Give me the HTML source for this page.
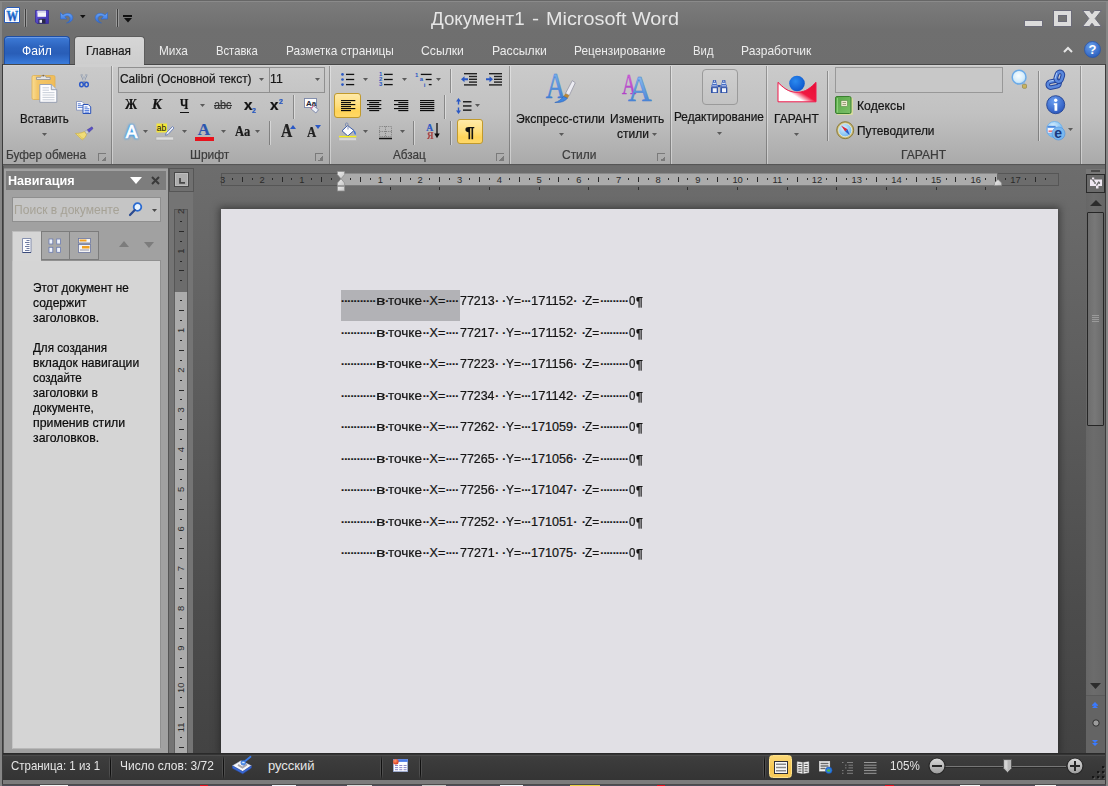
<!DOCTYPE html>
<html lang="ru">
<head>
<meta charset="utf-8">
<title>Документ1 - Microsoft Word</title>
<style>
*{box-sizing:border-box;margin:0;padding:0}
html,body{width:1108px;height:786px;overflow:hidden;background:#6e6e6e}
body{font-family:"Liberation Sans","DejaVu Sans",sans-serif;font-size:13px;color:#1e1e1e;position:relative}
#root,#root *{position:absolute}
#root{left:0;top:0;width:1108px;height:786px;overflow:hidden}
.t{white-space:nowrap;line-height:1;transform-origin:0 0;-webkit-text-stroke:.22px currentColor}
svg{overflow:visible}
#titlebar{left:0;top:0;width:1108px;height:65px;background:linear-gradient(#666 0,#666 1px,#8a8a8a 1px,#8a8a8a 2px,#7b7b7b 2px,#6f6f6f 30px,#6e6e6e 100%)}
#fileTab{left:4px;top:36px;width:66px;height:28px;border-radius:4px 4px 0 0;background:linear-gradient(#3d7bd8 0,#2c62bc 40%,#295eb8 62%,#3a7cdc 100%);border:1px solid #1f4fa4;border-bottom:none;box-shadow:inset 0 1px 0 #6c9be6}
#homeTab{left:73.500px;top:36px;width:71.200px;height:30px;border-radius:4px 4px 0 0;background:linear-gradient(#d6d6d6,#cdcdcd);border:1px solid #5d5d5d;border-bottom:none}
#ribbon{left:3px;top:64px;width:1102px;height:102px;background:linear-gradient(#484848 0,#484848 1px,#d2d2d2 1px,#d2d2d2 2px,#cacaca 2px,#c1c1c1 50px,#aaaaaa 100px,#525252 100px,#5c5c5c 101.500px,#6a6a6a 101.500px)}
.gsep{top:66px;width:2px;height:98px;background:linear-gradient(90deg,rgba(0,0,0,.27) 0,rgba(0,0,0,.27) 1px,rgba(255,255,255,.38) 1px)}
.vsep{width:2px;background:linear-gradient(90deg,rgba(0,0,0,.3) 0,rgba(0,0,0,.3) 1px,rgba(255,255,255,.4) 1px)}
.hot{background:linear-gradient(#ffeaa8,#ffde7c 50%,#ffd458 75%,#ffd868);border:1px solid #c19a2c;border-radius:3px}
.launch{width:8px;height:8px;border-left:1px solid #7a7a7a;border-top:1px solid #7a7a7a}
.launch:after{content:"";position:absolute;left:2px;top:2px;width:5px;height:5px;background:linear-gradient(135deg,transparent 50%,#7a7a7a 50%)}
</style>
</head>
<body>
<div id="root">
<!-- p_title -->
<div id="titlebar"></div>
<div class="t" style="left:430.6px;top:9.5px;font-size:18px;color:#e6e6e6;transform:scaleX(1.042);-webkit-text-stroke:0;">Документ1</div>
<div class="t" style="left:531.9px;top:9.5px;font-size:18px;color:#e6e6e6;transform:scaleX(1.178);-webkit-text-stroke:0;">-</div>
<div class="t" style="left:545.6px;top:9.5px;font-size:18px;color:#e6e6e6;transform:scaleX(1.102);-webkit-text-stroke:0;">Microsoft Word</div>
<svg style="left:4px;top:7px" width="16" height="16" viewBox="0 0 16 16"><defs><linearGradient id="wg" x1="0" y1="0" x2="0" y2="1"><stop offset="0" stop-color="#1f8ae0"/><stop offset="1" stop-color="#1840b0"/></linearGradient></defs><path d="M3 0.500h12.500v15h-15v-12.500z" fill="#fff" stroke="#2a5cb8" stroke-width="1"/><path d="M2 3.500l1.500-1.500h10.500v12h-12z" fill="#e4eefc"/><rect x="3" y="3" width="10" height="3" fill="#fff"/><text x="0" y="0" text-anchor="middle" font-family="Liberation Serif,serif" font-weight="bold" font-size="14.500" fill="url(#wg)" stroke="url(#wg)" stroke-width=".4" transform="translate(8.300 13.800) scale(.8 1)">W</text></svg>
<div style="left:23.5px;top:8.5px;width:3px;height:18.5px;background:linear-gradient(90deg,#9a9a9a 0,#9a9a9a 1px,#3e3e3e 1px,#3e3e3e 2px,#9a9a9a 2px);border-radius:1px"></div>
<svg style="left:34.5px;top:10px" width="14" height="14" viewBox="0 0 14 14"><defs><linearGradient id="sv" x1="0" y1="0" x2="1" y2="1"><stop offset="0" stop-color="#6a5ae0"/><stop offset="1" stop-color="#3a2ea8"/></linearGradient></defs><path d="M0.500 0.500h13v13h-11.500l-1.500-1.500z" fill="url(#sv)" stroke="#3a2e98" stroke-width=".8"/><rect x="2.500" y="0.800" width="8.500" height="6" fill="#f4f4fb"/><rect x="2.500" y="0.800" width="8.500" height="2" fill="#d4d4e8"/><rect x="3.500" y="8.800" width="7" height="4.700" fill="#2a2a48"/><rect x="4.500" y="9.800" width="2.500" height="3" fill="#e8e8f4"/></svg>
<svg style="left:60px;top:11px" width="13" height="12" viewBox="0 0 13 12"><defs><linearGradient id="ug" x1="0" y1="0" x2="0" y2="1"><stop offset="0" stop-color="#6aa6f8"/><stop offset="1" stop-color="#2f6ad8"/></linearGradient></defs><path d="M0.500 1.500v6.500h6.500l-2.300-2.300c2-1.800 5.300-1 5.300 2 0 1.800-1.200 3.200-3.500 4.300 4.300-.5 6.300-2.800 6.300-5.300 0-4.300-5.800-6-9.800-2.700z" fill="url(#ug)" stroke="#2f66c4" stroke-width=".6"/></svg>
<svg style="left:79.8px;top:15.4px" width="5.6" height="3.2" viewBox="0 0 5.6 3.2"><path d="M0 0h5.6L2.8 3.2z" fill="#111"/></svg>
<svg style="left:95px;top:11px" width="13" height="12" viewBox="0 0 13 12"><g transform="translate(13 0) scale(-1 1)"><path d="M0.500 1.500v6.500h6.500l-2.300-2.300c2-1.800 5.300-1 5.300 2 0 1.800-1.200 3.200-3.500 4.300 4.300-.5 6.300-2.800 6.300-5.300 0-4.300-5.800-6-9.800-2.700z" fill="url(#ug)" stroke="#2f66c4" stroke-width=".6"/></g></svg>
<div style="left:116.3px;top:8.5px;width:3px;height:18.5px;background:linear-gradient(90deg,#9a9a9a 0,#9a9a9a 1px,#3e3e3e 1px,#3e3e3e 2px,#9a9a9a 2px);border-radius:1px"></div>
<div style="left:123px;top:15px;width:9px;height:1.8px;background:#111"></div>
<svg style="left:123.5px;top:18px" width="8" height="4.5" viewBox="0 0 8 4.5"><path d="M0 0h8L4 4.5z" fill="#111"/></svg>
<div style="left:1024px;top:20px;width:19px;height:7px;background:#dcdcdc;border:1px solid #6b6b78"></div>
<div style="left:1053px;top:10px;width:19px;height:17px;background:#dcdcdc;border:1px solid #6b6b78"></div>
<div style="left:1058px;top:15px;width:9px;height:7px;background:#747474;border:1px solid #6b6b78"></div>
<svg style="left:1081.5px;top:10px" width="20" height="17" viewBox="0 0 20 17"><path d="M0.500 0.500h7l2.500 3.200 2.500-3.200h7l-6.300 8 6.300 8h-7l-2.500-3.200-2.500 3.200h-7l6.300-8z" fill="#dcdcdc" stroke="#6b6b78" stroke-width="1"/></svg>
<div id="fileTab"></div>
<div id="homeTab"></div>
<div class="t" style="left:22.0px;top:44.3px;font-size:13px;color:#fff;transform:scaleX(0.933);-webkit-text-stroke:0;">Файл</div>
<div class="t" style="left:86.3px;top:44.3px;font-size:13px;color:#1b1b1b;transform:scaleX(0.909);">Главная</div>
<div class="t" style="left:158.7px;top:44.3px;font-size:13px;color:#ececec;transform:scaleX(0.908);-webkit-text-stroke:0;">Миха</div>
<div class="t" style="left:215.7px;top:44.3px;font-size:13px;color:#ececec;transform:scaleX(0.865);-webkit-text-stroke:0;">Вставка</div>
<div class="t" style="left:285.6px;top:44.3px;font-size:13px;color:#ececec;transform:scaleX(0.915);-webkit-text-stroke:0;">Разметка страницы</div>
<div class="t" style="left:421.4px;top:44.3px;font-size:13px;color:#ececec;transform:scaleX(0.938);-webkit-text-stroke:0;">Ссылки</div>
<div class="t" style="left:491.5px;top:44.3px;font-size:13px;color:#ececec;transform:scaleX(0.941);-webkit-text-stroke:0;">Рассылки</div>
<div class="t" style="left:573.7px;top:44.3px;font-size:13px;color:#ececec;transform:scaleX(0.912);-webkit-text-stroke:0;">Рецензирование</div>
<div class="t" style="left:692.7px;top:44.3px;font-size:13px;color:#ececec;transform:scaleX(0.872);-webkit-text-stroke:0;">Вид</div>
<div class="t" style="left:740.6px;top:44.3px;font-size:13px;color:#ececec;transform:scaleX(0.926);-webkit-text-stroke:0;">Разработчик</div>
<svg style="left:1063px;top:46px" width="10" height="7" viewBox="0 0 10 7"><path d="M1 6l4-4 4 4" fill="none" stroke="#e6e6e6" stroke-width="2"/></svg>
<svg style="left:1084px;top:41px" width="17" height="17" viewBox="0 0 17 17"><defs><radialGradient id="hg" cx=".4" cy=".3" r=".8"><stop offset="0" stop-color="#6aa0ec"/><stop offset="1" stop-color="#2458b8"/></radialGradient></defs><circle cx="8.5" cy="8.5" r="8" fill="url(#hg)" stroke="#2a55a8" stroke-width=".8"/><text x="8.5" y="13" text-anchor="middle" font-family="Liberation Sans, sans-serif" font-weight="bold" font-size="13" fill="#fff">?</text></svg>
<!-- p_ribbon -->
<div id="ribbon"></div>
<div style="left:74.5px;top:64px;width:69.2px;height:2.5px;background:#cfcfcf"></div>
<div class="gsep" style="left:111px"></div>
<div class="gsep" style="left:328.5px"></div>
<div class="gsep" style="left:509px"></div>
<div class="gsep" style="left:670px"></div>
<div class="gsep" style="left:766px"></div>
<div class="gsep" style="left:1080px"></div>
<div class="t" style="left:5.5px;top:148.0px;font-size:13px;color:#3c3c3c;transform:scaleX(0.907);">Буфер обмена</div>
<div class="t" style="left:189.5px;top:148.0px;font-size:13px;color:#3c3c3c;transform:scaleX(0.920);">Шрифт</div>
<div class="t" style="left:392.5px;top:148.0px;font-size:13px;color:#3c3c3c;transform:scaleX(0.899);">Абзац</div>
<div class="t" style="left:561.9px;top:148.0px;font-size:13px;color:#3c3c3c;transform:scaleX(0.919);">Стили</div>
<div class="t" style="left:901.0px;top:147.6px;font-size:13px;color:#3c3c3c;transform:scaleX(0.930);">ГАРАНТ</div>
<div class="launch" style="left:97.5px;top:153px"></div>
<div class="launch" style="left:314.5px;top:153px"></div>
<div class="launch" style="left:495.5px;top:153px"></div>
<div class="launch" style="left:656.5px;top:153px"></div>
<svg style="left:31px;top:72px" width="27" height="31" viewBox="0 0 27 31"><defs><linearGradient id="pb" x1="0" y1="0" x2="1" y2="0"><stop offset="0" stop-color="#f9dc94"/><stop offset=".25" stop-color="#f4c666"/><stop offset="1" stop-color="#f0bc58"/></linearGradient></defs>
<rect x="1" y="3.500" width="23" height="24" rx="1.500" fill="url(#pb)" stroke="#e0b050" stroke-width=".8"/>
<path d="M5.500 7.500v-2.200h4.200c.3-2.400 5-2.400 5.300 0h4.200v2.200z" fill="#e4e6ea" stroke="#8a8e98" stroke-width=".8"/><circle cx="12.300" cy="3.700" r=".9" fill="#8a6a3a"/>
<path d="M8.800 12.500h11.500l5.500 5.200v12.600h-17z" fill="#fdfdfe" stroke="#8e98ae" stroke-width=".9"/>
<path d="M20.300 12.500v5.200h5.500" fill="#dfe4ee" stroke="#8e98ae" stroke-width=".9"/>
<path d="M11.500 15.800h6.500M11.500 18.200h6.500M11.500 20.600h12M11.500 23h12M11.500 25.400h12M11.500 27.800h12" stroke="#c2c8d4" stroke-width=".9"/></svg>
<div class="t" style="left:19.6px;top:112.0px;font-size:13px;color:#151515;transform:scaleX(0.887);">Вставить</div>
<svg style="left:42.2px;top:132.5px" width="5" height="3" viewBox="0 0 5 3"><path d="M0 0h5L2.5 3z" fill="#5a5a5a"/></svg>
<svg style="left:78.5px;top:74px" width="10" height="14" viewBox="0 0 10 14"><path d="M2.300 0.300l3.400 8.200M7.700 0.300l-3.400 8.200" stroke="#8a94a4" stroke-width="1.900" fill="none"/><path d="M2.600 0.600l2.800 6.500M7.400 0.600l-2.800 6.500" stroke="#d8dce4" stroke-width=".7" fill="none"/><ellipse cx="2.500" cy="10.500" rx="1.800" ry="2.300" fill="none" stroke="#2a58c8" stroke-width="1.500"/><ellipse cx="7.500" cy="10.500" rx="1.800" ry="2.300" fill="none" stroke="#2a58c8" stroke-width="1.500"/></svg>
<svg style="left:75.5px;top:100.5px" width="16" height="13" viewBox="0 0 16 13"><path d="M0.500 0.500h5.500l2.300 2.300v6.400h-7.800z" fill="#fbfcff" stroke="#7a8ab8" stroke-width=".8"/><path d="M1.800 2.800h3M1.800 4.600h5M1.800 6.400h5" stroke="#4a72d0" stroke-width=".9"/><path d="M7 3.500h5.300l2.400 2.400v6.600h-7.700z" fill="#fbfcff" stroke="#2a52b8" stroke-width="1"/><path d="M8.500 6h3M8.500 7.800h4.800M8.500 9.600h4.800M8.500 11.200h4.800" stroke="#3a6ad8" stroke-width=".9"/></svg>
<svg style="left:75px;top:126px" width="18" height="15" viewBox="0 0 18 15"><path d="M17 0.800l1 1.800-4.200 3.800-1.800-2.400z" fill="#5a4ec8" stroke="#3a3498" stroke-width=".5"/><path d="M12 4l1.800 2.400-2.200 2-2.200-2.800z" fill="#c8ccd4" stroke="#8a8e98" stroke-width=".5"/><path d="M9.400 5.600l2.200 2.800c-.6 2.200-2.400 4.200-4.200 5.400-2-1.400-5-4.400-7-6.400 3.400 0 6.800-.4 9-1.800z" fill="#f0dc78" stroke="#c8aa3a" stroke-width=".6"/><path d="M3 8.500c2.500 1.500 4 3 5 4.500" stroke="#d8c050" stroke-width=".7" fill="none"/></svg>
<div style="left:117.5px;top:67px;width:152px;height:25.5px;border:1px solid #909090;background:linear-gradient(#cbcbcb,#c5c5c5)"></div>
<div style="left:268.5px;top:67px;width:56.5px;height:25.5px;border:1px solid #909090;background:linear-gradient(#cbcbcb,#c5c5c5)"></div>
<div class="t" style="left:120.1px;top:72.0px;font-size:13px;color:#151515;transform:scaleX(0.916);">Calibri (Основной текст)</div>
<svg style="left:258.7px;top:77.5px" width="5" height="3" viewBox="0 0 5 3"><path d="M0 0h5L2.5 3z" fill="#5a5a5a"/></svg>
<div class="t" style="left:270.4px;top:72.0px;font-size:13px;color:#151515;transform:scaleX(0.943);">11</div>
<svg style="left:315px;top:77.5px" width="5" height="3" viewBox="0 0 5 3"><path d="M0 0h5L2.5 3z" fill="#5a5a5a"/></svg>
<div class="t" style="left:124.7px;top:98.3px;font-size:14px;color:#111;font-family:'Liberation Serif','DejaVu Serif',serif;font-weight:bold;transform:scaleX(0.869);">Ж</div>
<div class="t" style="left:152.1px;top:98.3px;font-size:14px;color:#111;font-family:'Liberation Serif','DejaVu Serif',serif;font-weight:bold;font-style:italic;transform:scaleX(1.026);">К</div>
<div class="t" style="left:179.6px;top:98.3px;font-size:14px;color:#111;font-family:'Liberation Serif','DejaVu Serif',serif;font-weight:bold;transform:scaleX(0.809);">Ч</div>
<div style="left:179.5px;top:111.5px;width:9px;height:1.2px;background:#111"></div>
<svg style="left:200px;top:104px" width="5" height="3" viewBox="0 0 5 3"><path d="M0 0h5L2.5 3z" fill="#5a5a5a"/></svg>
<div class="t" style="left:213.8px;top:99.3px;font-size:12px;color:#333;transform:scaleX(0.901);">abc</div>
<div style="left:213.5px;top:105.3px;width:18.5px;height:1px;background:#333"></div>
<div class="t" style="left:243.6px;top:98.1px;font-size:14px;color:#111;font-weight:bold;transform:scaleX(1.090);">x</div>
<div class="t" style="left:252.3px;top:106.6px;font-size:7px;color:#2456c0;font-weight:bold;transform:scaleX(1.036);">2</div>
<div class="t" style="left:269.9px;top:98.1px;font-size:14px;color:#111;font-weight:bold;transform:scaleX(1.090);">x</div>
<div class="t" style="left:278.8px;top:98.1px;font-size:7px;color:#2456c0;font-weight:bold;transform:scaleX(1.036);">2</div>
<div class="vsep" style="left:292.500px;top:95px;height:24px"></div>
<svg style="left:303.5px;top:97.5px" width="17" height="16" viewBox="0 0 17 16"><rect x="0.500" y="0.500" width="12" height="9" fill="#fdfdfd" stroke="#7a86a8" stroke-width=".9"/><text x="2" y="8" font-family="Liberation Sans,sans-serif" font-size="8" font-weight="bold" fill="#223">Aa</text><path d="M9.500 7.500l5 4.200-2.600 3.300-5-4.200z" fill="#eef1f8" stroke="#7a86a8" stroke-width=".9"/><path d="M7 10.800l2.500-3.200" stroke="#d9749a" stroke-width="1.200"/></svg>
<svg style="left:123px;top:123.5px" width="17" height="16" viewBox="0 0 17 16"><defs><filter id="gl" x="-40%" y="-40%" width="180%" height="180%"><feGaussianBlur stdDeviation="1.300"/></filter></defs><text x="8.500" y="14" text-anchor="middle" font-family="Liberation Sans,sans-serif" font-size="18" font-weight="bold" fill="#3a9cf0" stroke="#3a9cf0" stroke-width="1.500" filter="url(#gl)">A</text><text x="8.500" y="14" text-anchor="middle" font-family="Liberation Sans,sans-serif" font-size="17.500" fill="#fff" stroke="#fff" stroke-width=".7">A</text></svg>
<svg style="left:143.2px;top:130px" width="5" height="3" viewBox="0 0 5 3"><path d="M0 0h5L2.5 3z" fill="#5a5a5a"/></svg>
<svg style="left:156px;top:123px" width="19" height="18" viewBox="0 0 19 18"><rect x="0.500" y="0.500" width="10.500" height="9" fill="#f4e63a"/><text x="0.800" y="8" font-family="Liberation Sans,sans-serif" font-size="8.500" fill="#111">ab</text><path d="M16.500 3.500l1.500 1.500-6 6.500-2.500.8.700-2.500z" fill="#e8ecf6" stroke="#5c74b0" stroke-width=".8"/><rect x="0" y="14" width="17.500" height="3" fill="#dcdcdc" stroke="#a8a8a8" stroke-width=".5"/></svg>
<svg style="left:182px;top:130px" width="5" height="3" viewBox="0 0 5 3"><path d="M0 0h5L2.5 3z" fill="#5a5a5a"/></svg>
<div class="t" style="left:197.8px;top:120.8px;font-size:17px;color:#2a55b0;font-family:'Liberation Serif','DejaVu Serif',serif;font-weight:bold;">A</div>
<div style="left:195px;top:137px;width:19px;height:3.5px;background:#e8121c"></div>
<svg style="left:220.7px;top:130px" width="5" height="3" viewBox="0 0 5 3"><path d="M0 0h5L2.5 3z" fill="#5a5a5a"/></svg>
<div class="t" style="left:234.9px;top:123.9px;font-size:14.5px;color:#1a1a1a;font-family:'Liberation Serif','DejaVu Serif',serif;font-weight:bold;transform:scaleX(0.863);">Aa</div>
<svg style="left:255px;top:130px" width="5" height="3" viewBox="0 0 5 3"><path d="M0 0h5L2.5 3z" fill="#5a5a5a"/></svg>
<div class="vsep" style="left:269px;top:121px;height:24px"></div>
<div class="t" style="left:280.9px;top:122.4px;font-size:18px;color:#222;font-family:'Liberation Serif','DejaVu Serif',serif;font-weight:bold;transform:scaleX(0.865);">A</div>
<svg style="left:290px;top:125px" width="6" height="4" viewBox="0 0 6 4"><path d="M0 4l3-4 3 4z" fill="#2a58c4"/></svg>
<div class="t" style="left:306.9px;top:125.8px;font-size:14px;color:#222;font-family:'Liberation Serif','DejaVu Serif',serif;font-weight:bold;transform:scaleX(0.910);">A</div>
<svg style="left:314.5px;top:125px" width="6" height="4" viewBox="0 0 6 4"><path d="M0 0h6l-3 4z" fill="#2a58c4"/></svg>
<svg style="left:341px;top:73px" width="14" height="13" viewBox="0 0 14 13"><circle cx="1.500" cy="1.4" r="1.350" fill="#2a58c4"/><rect x="5" y="0.75" width="8.200" height="1.300" fill="#111"/><circle cx="1.500" cy="6.5" r="1.350" fill="#2a58c4"/><rect x="5" y="5.85" width="8.200" height="1.300" fill="#111"/><circle cx="1.500" cy="11.6" r="1.350" fill="#2a58c4"/><rect x="5" y="10.95" width="8.200" height="1.300" fill="#111"/></svg>
<svg style="left:362.5px;top:77.5px" width="5" height="3" viewBox="0 0 5 3"><path d="M0 0h5L2.5 3z" fill="#5a5a5a"/></svg>
<svg style="left:379.2px;top:72px" width="14" height="14" viewBox="0 0 14 14"><text x="0" y="4.2" font-family="Liberation Sans,sans-serif" font-size="6" font-weight="bold" fill="#2a58c4">1</text><rect x="5" y="1.75" width="8.700" height="1.300" fill="#111"/><text x="0" y="9.3" font-family="Liberation Sans,sans-serif" font-size="6" font-weight="bold" fill="#2a58c4">2</text><rect x="5" y="6.85" width="8.700" height="1.300" fill="#111"/><text x="0" y="14.4" font-family="Liberation Sans,sans-serif" font-size="6" font-weight="bold" fill="#2a58c4">3</text><rect x="5" y="11.95" width="8.700" height="1.300" fill="#111"/></svg>
<svg style="left:402px;top:77.5px" width="5" height="3" viewBox="0 0 5 3"><path d="M0 0h5L2.5 3z" fill="#5a5a5a"/></svg>
<svg style="left:415.2px;top:72px" width="18" height="15" viewBox="0 0 18 15"><text x="0" y="4.500" font-family="Liberation Sans,sans-serif" font-size="6" font-weight="bold" fill="#2a58c4">1</text><rect x="5.800" y="1.750" width="10.800" height="1.300" fill="#111"/><text x="4.800" y="9.400" font-family="Liberation Sans,sans-serif" font-size="6" font-weight="bold" fill="#2a58c4">a</text><rect x="10.700" y="6.850" width="5.900" height="1.300" fill="#111"/><text x="8.800" y="14.800" font-family="Liberation Sans,sans-serif" font-size="6" font-weight="bold" fill="#2a58c4">i</text><rect x="13.800" y="11.950" width="2.800" height="1.300" fill="#111"/></svg>
<svg style="left:436.2px;top:77.5px" width="5" height="3" viewBox="0 0 5 3"><path d="M0 0h5L2.5 3z" fill="#5a5a5a"/></svg>
<div class="vsep" style="left:450px;top:69px;height:24px"></div>
<svg style="left:460.7px;top:73px" width="17" height="13" viewBox="0 0 17 13"><rect x="3" y="0" width="13" height="1.400" fill="#222"/><rect x="8" y="2.8" width="8" height="1.400" fill="#222"/><rect x="8" y="5.6" width="8" height="1.400" fill="#222"/><rect x="8" y="8.4" width="8" height="1.400" fill="#222"/><rect x="3" y="11.2" width="13" height="1.400" fill="#222"/><path d="M0 6.300l3.500-3v2h3.500v2h-3.500v2z" fill="#2a58c4"/></svg>
<svg style="left:485.7px;top:73px" width="17" height="13" viewBox="0 0 17 13"><rect x="3" y="0" width="13" height="1.400" fill="#222"/><rect x="8" y="2.8" width="8" height="1.400" fill="#222"/><rect x="8" y="5.6" width="8" height="1.400" fill="#222"/><rect x="8" y="8.4" width="8" height="1.400" fill="#222"/><rect x="3" y="11.2" width="13" height="1.400" fill="#222"/><path d="M7 6.300l-3.500-3v2h-3.500v2h3.500v2z" fill="#2a58c4"/></svg>
<div class="hot" style="left:334px;top:92.500px;width:26.500px;height:25.500px"></div>
<svg style="left:340.8px;top:99.9px" width="14" height="12" viewBox="0 0 14 12"><rect x="0" y="0" width="14.3" height="1.150" fill="#0c0c0c"/><rect x="0" y="2" width="10" height="1.150" fill="#0c0c0c"/><rect x="0" y="4" width="14.3" height="1.150" fill="#0c0c0c"/><rect x="0" y="6" width="10" height="1.150" fill="#0c0c0c"/><rect x="0" y="8" width="14.3" height="1.150" fill="#0c0c0c"/><rect x="0" y="10" width="10" height="1.150" fill="#0c0c0c"/></svg>
<svg style="left:367.3px;top:99.9px" width="14" height="12" viewBox="0 0 14 12"><rect x="0" y="0" width="14.3" height="1.150" fill="#0c0c0c"/><rect x="2.2" y="2" width="10" height="1.150" fill="#0c0c0c"/><rect x="0" y="4" width="14.3" height="1.150" fill="#0c0c0c"/><rect x="2.2" y="6" width="10" height="1.150" fill="#0c0c0c"/><rect x="0" y="8" width="14.3" height="1.150" fill="#0c0c0c"/><rect x="2.2" y="10" width="10" height="1.150" fill="#0c0c0c"/></svg>
<svg style="left:393.8px;top:99.9px" width="14" height="12" viewBox="0 0 14 12"><rect x="0" y="0" width="14.3" height="1.150" fill="#0c0c0c"/><rect x="4.3" y="2" width="10" height="1.150" fill="#0c0c0c"/><rect x="0" y="4" width="14.3" height="1.150" fill="#0c0c0c"/><rect x="4.3" y="6" width="10" height="1.150" fill="#0c0c0c"/><rect x="0" y="8" width="14.3" height="1.150" fill="#0c0c0c"/><rect x="4.3" y="10" width="10" height="1.150" fill="#0c0c0c"/></svg>
<svg style="left:420.2px;top:99.9px" width="14" height="12" viewBox="0 0 14 12"><rect x="0" y="0" width="14.3" height="1.150" fill="#0c0c0c"/><rect x="0" y="2" width="14.3" height="1.150" fill="#0c0c0c"/><rect x="0" y="4" width="14.3" height="1.150" fill="#0c0c0c"/><rect x="0" y="6" width="14.3" height="1.150" fill="#0c0c0c"/><rect x="0" y="8" width="14.3" height="1.150" fill="#0c0c0c"/><rect x="0" y="10" width="14.3" height="1.150" fill="#0c0c0c"/></svg>
<div class="vsep" style="left:444px;top:95px;height:24px"></div>
<svg style="left:456px;top:97.5px" width="16" height="16" viewBox="0 0 16 16"><path d="M2.500 0l2.500 3.500h-1.800v3h-1.400v-3h-1.800zM2.500 16l2.500-3.500h-1.800v-3h-1.400v3h-1.800z" fill="#2a58c4"/><rect x="7" y="3" width="8.500" height="1.500" fill="#222"/><rect x="7" y="7.200" width="8.500" height="1.500" fill="#222"/><rect x="7" y="11.400" width="8.500" height="1.500" fill="#222"/></svg>
<svg style="left:475px;top:104px" width="5" height="3" viewBox="0 0 5 3"><path d="M0 0h5L2.5 3z" fill="#5a5a5a"/></svg>
<svg style="left:338.7px;top:123px" width="19" height="18" viewBox="0 0 19 18"><path d="M8.500 2.500l6.500 5-6.200 5.500-5.800-5.200z" fill="#fbfcff" stroke="#3a5aa8" stroke-width="1"/><path d="M9 6.500v-5.500c0-1.500-2.500-1.500-2.500 0v2" fill="none" stroke="#7a8ab0" stroke-width=".9"/><path d="M14.800 7.300c1.800 1.200 2.600 3.200 1.700 4.800-1.300-.8-2-2.800-1.700-4.800z" fill="#3a74e0"/><rect x="0" y="12.900" width="17.300" height="1.700" fill="#f8f018"/><rect x="0" y="14.800" width="17.300" height="2.800" fill="#d8d8d8" stroke="#b0b0b0" stroke-width=".5"/></svg>
<svg style="left:362.5px;top:130px" width="5" height="3" viewBox="0 0 5 3"><path d="M0 0h5L2.5 3z" fill="#5a5a5a"/></svg>
<svg style="left:379.3px;top:126px" width="13" height="14" viewBox="0 0 13 14"><rect x="0.500" y="0.500" width="12" height="10" fill="none" stroke="#7a7a7a" stroke-width="1" stroke-dasharray="1 1.200"/><path d="M6.500 0.500v10M0.500 5.500h12" stroke="#7a7a7a" stroke-width="1" stroke-dasharray="1 1.200"/><path d="M0 12.500h13" stroke="#111" stroke-width="1.500"/></svg>
<svg style="left:399.5px;top:130px" width="5" height="3" viewBox="0 0 5 3"><path d="M0 0h5L2.5 3z" fill="#5a5a5a"/></svg>
<div class="vsep" style="left:412.500px;top:121px;height:24px"></div>
<div class="t" style="left:426.2px;top:124.0px;font-size:9.5px;color:#2a58c4;font-family:'Liberation Serif','DejaVu Serif',serif;font-weight:bold;">А</div>
<div class="t" style="left:426.5px;top:132.2px;font-size:9.5px;color:#a84848;font-family:'Liberation Serif','DejaVu Serif',serif;font-weight:bold;transform:scaleX(0.939);">Я</div>
<svg style="left:434.2px;top:123.4px" width="6" height="15.5" viewBox="0 0 6 15.5"><path d="M3 0v12" stroke="#0c0c0c" stroke-width="1.300"/><path d="M0.300 10.500h5.400l-2.700 4.800z" fill="#0c0c0c"/></svg>
<div class="vsep" style="left:450px;top:121px;height:24px"></div>
<div class="hot" style="left:456.700px;top:119px;width:26px;height:25px"></div>
<div class="t" style="left:464.9px;top:124.3px;font-size:15px;color:#111;font-weight:bold;transform:scaleX(1.159);">¶</div>
<svg style="left:0px;top:0px" width="1" height="1" viewBox="0 0 1 1"><defs><linearGradient id="qa" x1="0" y1="0" x2="0" y2="1"><stop offset="0" stop-color="#8cc0f4"/><stop offset="1" stop-color="#2f6fcc"/></linearGradient></defs><text transform="translate(555.700 97.700) scale(.75 1)" text-anchor="middle" font-family="Liberation Serif,serif" font-size="36.500" fill="url(#qa)" stroke="#3f7cd0" stroke-width=".5">A</text><path d="M572.300 80.600l3 2.200-6 12.600-3.800-2z" fill="#ececf2" stroke="#8c8c9c" stroke-width=".7"/><path d="M565.500 93.400l3.800 2-1.900 3.300-4.200-2.100z" fill="#b8883a"/><path d="M563.600 96.400l3.800 1.900c-2.400 3-6.600 4.700-12.600 4.200 3.600-1 6.400-3 8.800-6.100z" fill="#3f86e0" stroke="#2a62b8" stroke-width=".6"/></svg>
<div class="t" style="left:516.4px;top:112.0px;font-size:13px;color:#151515;transform:scaleX(0.935);">Экспресс-стили</div>
<svg style="left:558.7px;top:132.5px" width="5" height="3" viewBox="0 0 5 3"><path d="M0 0h5L2.5 3z" fill="#5a5a5a"/></svg>
<svg style="left:0px;top:0px" width="1" height="1" viewBox="0 0 1 1"><defs><linearGradient id="ca" x1="0" y1="0" x2="0" y2="1"><stop offset="0" stop-color="#96c6f6"/><stop offset="1" stop-color="#3a78d0"/></linearGradient><linearGradient id="cb" x1="0" y1="0" x2="0" y2="1"><stop offset="0" stop-color="#e070e0"/><stop offset="1" stop-color="#a838c0"/></linearGradient></defs><text transform="translate(629 93.600) scale(.68 1)" text-anchor="middle" font-family="Liberation Serif,serif" font-size="28.500" fill="url(#cb)" stroke="#b040c8" stroke-width=".4">A</text><text transform="translate(639.800 101.200) scale(.92 1)" text-anchor="middle" font-family="Liberation Serif,serif" font-size="35.500" fill="url(#ca)" stroke="#3f7cd0" stroke-width=".5">A</text></svg>
<div class="t" style="left:610.0px;top:112.0px;font-size:13px;color:#151515;transform:scaleX(0.924);">Изменить</div>
<div class="t" style="left:616.5px;top:127.0px;font-size:13px;color:#151515;transform:scaleX(0.921);">стили</div>
<svg style="left:652.2px;top:132.5px" width="5" height="3" viewBox="0 0 5 3"><path d="M0 0h5L2.5 3z" fill="#5a5a5a"/></svg>
<div style="left:702px;top:69px;width:36px;height:36px;border:1px solid #9a9a9a;border-radius:4px;background:linear-gradient(#cfcfcf,#c3c3c3)"></div>
<svg style="left:711px;top:80.3px" width="17" height="13" viewBox="0 0 17 13"><rect x="1.8" y="0" width="3.400" height="2.600" rx=".8" fill="#3a5eb8"/><circle cx="3.5" cy="1.200" r=".6" fill="#e8eefb"/><rect x="1.2" y="2.400" width="4.600" height="2.600" fill="#4a72cc"/><rect x="1.7" y="3" width="3.600" height=".9" fill="#e0e8f8"/><rect x="0.5" y="4.800" width="6" height="2.600" fill="#3a5eb8"/><rect x="1.2" y="5.400" width="4.600" height=".9" fill="#dfe7f8"/><rect x="0" y="7.200" width="7" height="5.800" fill="#2f52a8"/><rect x="1.7" y="8.200" width="4" height="4" fill="#eef2fc"/><rect x="11.1" y="0" width="3.400" height="2.600" rx=".8" fill="#3a5eb8"/><circle cx="12.8" cy="1.200" r=".6" fill="#e8eefb"/><rect x="10.5" y="2.400" width="4.600" height="2.600" fill="#4a72cc"/><rect x="11" y="3" width="3.600" height=".9" fill="#e0e8f8"/><rect x="9.8" y="4.800" width="6" height="2.600" fill="#3a5eb8"/><rect x="10.5" y="5.400" width="4.600" height=".9" fill="#dfe7f8"/><rect x="9.3" y="7.200" width="7" height="5.800" fill="#2f52a8"/><rect x="11" y="8.200" width="4" height="4" fill="#eef2fc"/><rect x="6.800" y="5" width="2.800" height="2.200" fill="#2f52a8"/></svg>
<div class="t" style="left:674.3px;top:110.3px;font-size:13px;color:#151515;transform:scaleX(0.908);">Редактирование</div>
<svg style="left:717.2px;top:131.5px" width="5" height="3" viewBox="0 0 5 3"><path d="M0 0h5L2.5 3z" fill="#5a5a5a"/></svg>
<svg style="left:778px;top:74px" width="38" height="28" viewBox="0 0 38 28"><defs><radialGradient id="gb" cx=".4" cy=".35" r=".75"><stop offset="0" stop-color="#2a8af0"/><stop offset="1" stop-color="#0a50c8"/></radialGradient><linearGradient id="gr" x1="0" y1="1" x2="1" y2=".2"><stop offset="0" stop-color="#fff"/><stop offset=".42" stop-color="#fff"/><stop offset=".62" stop-color="#f01840"/><stop offset="1" stop-color="#e81038"/></linearGradient></defs><path d="M0 8.300c5 5 10 10 19 10s14-5 19-10v19.500h-38z" fill="url(#gr)" stroke="#f0184a" stroke-width="1"/><circle cx="19" cy="9.500" r="7.800" fill="url(#gb)"/></svg>
<div class="t" style="left:773.5px;top:111.8px;font-size:13px;color:#151515;transform:scaleX(0.920);">ГАРАНТ</div>
<svg style="left:793.7px;top:132.5px" width="5" height="3" viewBox="0 0 5 3"><path d="M0 0h5L2.5 3z" fill="#5a5a5a"/></svg>
<div class="vsep" style="left:826.500px;top:71px;height:70px"></div>
<div style="left:834.5px;top:67px;width:168.5px;height:25.5px;border:1px solid #989898;background:#c8c8c8"></div>
<svg style="left:1011px;top:69px" width="17" height="20" viewBox="0 0 17 20"><defs><radialGradient id="mg" cx=".45" cy=".4" r=".65"><stop offset="0" stop-color="#f8fdff"/><stop offset=".65" stop-color="#d4ecfb"/><stop offset="1" stop-color="#9ccaf0"/></radialGradient></defs><circle cx="8.100" cy="8.200" r="6.900" fill="url(#mg)" stroke="#6aaae8" stroke-width="1.500"/><rect x="11.500" y="15.300" width="4" height="4" rx="1" fill="#c8b460" stroke="#8a7a3a" stroke-width=".6"/><path d="M12 13l1.500 2" stroke="#8ab0d8" stroke-width="1.500"/></svg>
<svg style="left:835px;top:96px" width="18" height="19" viewBox="0 0 18 19"><defs><linearGradient id="kg" x1="0" y1="0" x2="1" y2="1"><stop offset="0" stop-color="#58a848"/><stop offset="1" stop-color="#7cc068"/></linearGradient></defs><rect x="1.500" y="1.500" width="16.500" height="17.500" rx="1.500" fill="#d8dca0"/><rect x="0.500" y="0.500" width="15.500" height="17" rx="1.500" fill="url(#kg)" stroke="#3a8030" stroke-width="1"/><path d="M2.500 2v14.500" stroke="#8ad078" stroke-width="1"/><rect x="6" y="4.500" width="6.500" height="6" fill="#ecebd0" stroke="#5a8a4a" stroke-width=".6"/><path d="M7.500 6.500h3.500M7.500 8.500h3.500" stroke="#8a8a6a" stroke-width=".8"/></svg>
<div class="t" style="left:856.7px;top:99.3px;font-size:13px;color:#151515;transform:scaleX(0.940);">Кодексы</div>
<svg style="left:835.5px;top:121.3px" width="18.5" height="18.5" viewBox="0 0 18.5 18.5"><defs><radialGradient id="cg" cx=".4" cy=".35" r=".7"><stop offset="0" stop-color="#d8f0ff"/><stop offset="1" stop-color="#6ab4f0"/></radialGradient></defs><circle cx="9.200" cy="9.200" r="8.500" fill="#c8b870" stroke="#8a7a3a" stroke-width="1"/><circle cx="9.200" cy="9.200" r="6.600" fill="url(#cg)" stroke="#f0f0e0" stroke-width=".8"/><path d="M5 4.500l6.500 3.700-2.300 2.300z" fill="#d82838"/><path d="M13.800 14.300l-4.600-3.800 2.300-2.300z" fill="#2a58c8"/></svg>
<div class="t" style="left:856.8px;top:124.4px;font-size:13px;color:#151515;transform:scaleX(0.912);">Путеводители</div>
<div class="vsep" style="left:1037.500px;top:71px;height:70px"></div>
<svg style="left:1045px;top:69px" width="21" height="21" viewBox="0 0 21 21"><g transform="translate(8.7 15) rotate(-12)"><rect x="-6" y="-3" width="12" height="6" rx="3" fill="none" stroke="#24449a" stroke-width="4.600"/><rect x="-6" y="-3" width="12" height="6" rx="3" fill="none" stroke="#5a88dc" stroke-width="2.600"/><path d="M-4 -3.600h8" stroke="#b0ccf8" stroke-width="1"/></g><g transform="translate(14.3 7.8) rotate(-72)"><rect x="-5" y="-3" width="10" height="6" rx="3" fill="none" stroke="#24449a" stroke-width="4.600"/><rect x="-5" y="-3" width="10" height="6" rx="3" fill="none" stroke="#5a88dc" stroke-width="2.600"/><path d="M-3 -3.600h6" stroke="#b0ccf8" stroke-width="1"/></g></svg>
<svg style="left:1046px;top:95px" width="19.5" height="19.5" viewBox="0 0 19.5 19.5"><defs><radialGradient id="ig" cx=".4" cy=".3" r=".8"><stop offset="0" stop-color="#6a9ef0"/><stop offset="1" stop-color="#2450b8"/></radialGradient></defs><circle cx="9.700" cy="9.700" r="9" fill="url(#ig)" stroke="#2a4a98" stroke-width="1"/><circle cx="9.700" cy="5.300" r="1.700" fill="#fff"/><path d="M7.800 8.300h3.500v7.500h-2.800v-5.800h-.7z" fill="#fff"/></svg>
<svg style="left:1046px;top:120.5px" width="20" height="19" viewBox="0 0 20 19"><defs><radialGradient id="eg" cx=".4" cy=".3" r=".8"><stop offset="0" stop-color="#d8f0ff"/><stop offset="1" stop-color="#5aa8ec"/></radialGradient></defs><circle cx="8.500" cy="8.500" r="8" fill="url(#eg)" stroke="#6ab0ec" stroke-width=".8"/><rect x="1.500" y="5" width="8" height="7" fill="#f4f8ff" stroke="#7a9ad0" stroke-width=".5"/><rect x="1.500" y="5" width="8" height="1.800" fill="#4a8ae0"/><rect x="2.500" y="9.500" width="4" height="1.300" fill="#e85a5a"/><circle cx="12.500" cy="12.500" r="6.500" fill="#7ab8f0" stroke="#4a90e0" stroke-width=".6"/><text x="8.200" y="17.300" font-family="Liberation Sans,sans-serif" font-weight="bold" font-size="14" fill="#1a3a80">e</text></svg>
<svg style="left:1068.2px;top:128px" width="5" height="3" viewBox="0 0 5 3"><path d="M0 0h5L2.5 3z" fill="#5a5a5a"/></svg>
<!-- p_main -->
<div style="left:3px;top:166px;width:1102px;height:587px;background:linear-gradient(#6d6d6d,#5e5e5e 35%,#4c4c4c 75%,#434343)"></div>
<div style="left:3px;top:166px;width:1px;height:587px;background:#5a5a5a"></div>
<div style="left:4px;top:168px;width:164.5px;height:585px;background:#a1a1a1;border-top:1px solid #8a8a8a"></div>
<div style="left:168px;top:168px;width:1px;height:585px;background:#555"></div>
<div style="left:169px;top:168px;width:24px;height:585px;background:#747474"></div>
<div style="left:6px;top:171px;width:160px;height:19px;background:#7d7d7d"></div>
<div class="t" style="left:7.7px;top:173.9px;font-size:13.5px;color:#fff;font-weight:bold;transform:scaleX(0.933);-webkit-text-stroke:0;">Навигация</div>
<svg style="left:130px;top:177px" width="12" height="7" viewBox="0 0 12 7"><path d="M0 0h12l-6 7z" fill="#fff"/></svg>
<svg style="left:151px;top:176px" width="9" height="9" viewBox="0 0 9 9"><path d="M1 1l7 7M8 1l-7 7" stroke="#3a3a3a" stroke-width="2"/></svg>
<div style="left:11.5px;top:197px;width:149.5px;height:25px;background:#c5c5c5;border:1px solid #8f8f8f"></div>
<div class="t" style="left:14.0px;top:202.5px;font-size:13px;color:#a6a296;transform:scaleX(0.929);-webkit-text-stroke:0;">Поиск в документе</div>
<svg style="left:129px;top:202px" width="14" height="14" viewBox="0 0 14 14"><circle cx="8.500" cy="5" r="3.800" fill="#e8f4ff" stroke="#2a6ad0" stroke-width="1.800"/><path d="M5.800 8l-4.800 5" stroke="#2a4a90" stroke-width="2.200" stroke-linecap="round"/></svg>
<svg style="left:152px;top:208.5px" width="5" height="3" viewBox="0 0 5 3"><path d="M0 0h5L2.5 3z" fill="#4a4a4a"/></svg>
<div style="left:11.5px;top:259.5px;width:149.5px;height:489.5px;background:#d5d5d5;border:1px solid #909090;border-left-color:#c4c4c4;border-bottom-color:#b8b8b8"></div>
<div style="left:11.5px;top:231px;width:29.5px;height:29.5px;background:#d6d6d6;border:1px solid #bdbdbd;border-bottom:none;border-right:none"></div>
<div style="left:40.5px;top:231px;width:29.5px;height:29px;background:#a8a8a8;border:1px solid #7c7c7c"></div>
<div style="left:69.5px;top:231px;width:29.5px;height:29px;background:#a8a8a8;border:1px solid #7c7c7c;border-left:none"></div>
<svg style="left:22px;top:238px" width="10" height="15" viewBox="0 0 10 15"><path d="M0.500 0.500h8.500v14h-8.500z" fill="#fbfbfd" stroke="#7a86a8" stroke-width=".9"/><path d="M0.500 14.500h8.500" stroke="#3a4a7a" stroke-width="1"/><path d="M4.500 2.500h3M3 4.500h4.500M4.500 6.500h3M3 8.500h4.500M4.500 10.500h3M3 12.500h4.500" stroke="#4a5a88" stroke-width=".8"/></svg>
<svg style="left:49px;top:238.5px" width="12" height="14" viewBox="0 0 12 14"><rect x="0" y="0" width="3.800" height="5" fill="#eef2fb" stroke="#6a7ab0" stroke-width=".8"/><rect x="7.700" y="0" width="3.800" height="5" fill="#eef2fb" stroke="#6a7ab0" stroke-width=".8"/><rect x="0" y="8.300" width="3.800" height="5" fill="#eef2fb" stroke="#6a7ab0" stroke-width=".8"/><rect x="7.700" y="8.300" width="3.800" height="5" fill="#eef2fb" stroke="#6a7ab0" stroke-width=".8"/></svg>
<svg style="left:78px;top:238px" width="13" height="15" viewBox="0 0 13 15"><rect x="0.500" y="0.500" width="12" height="4.500" fill="#f4f4f4" stroke="#6a76a0" stroke-width=".8"/><rect x="1.500" y="1.500" width="7" height="2" fill="#f0a020"/><rect x="0.500" y="6.500" width="12" height="8" fill="#f4f4f4" stroke="#6a76a0" stroke-width=".8"/><rect x="4" y="8" width="7.500" height="2.500" fill="#f0a020"/><path d="M2 12h9" stroke="#8a8aa0" stroke-width=".9"/></svg>
<svg style="left:118.5px;top:240.5px" width="10" height="6" viewBox="0 0 10 6"><path d="M0 6h10l-5-6z" fill="#7c7c7c"/></svg>
<svg style="left:143.5px;top:241.5px" width="10" height="6" viewBox="0 0 10 6"><path d="M0 0h10l-5 6z" fill="#7c7c7c"/></svg>
<div class="t" style="left:32.7px;top:281.3px;font-size:13px;color:#0a0a0a;transform:scaleX(0.904);">Этот документ не</div>
<div class="t" style="left:32.8px;top:296.3px;font-size:13px;color:#0a0a0a;transform:scaleX(0.928);">содержит</div>
<div class="t" style="left:33.0px;top:311.3px;font-size:13px;color:#0a0a0a;transform:scaleX(0.944);">заголовков.</div>
<div class="t" style="left:33.2px;top:341.3px;font-size:13px;color:#0a0a0a;transform:scaleX(0.894);">Для создания</div>
<div class="t" style="left:32.5px;top:356.3px;font-size:13px;color:#0a0a0a;transform:scaleX(0.932);">вкладок навигации</div>
<div class="t" style="left:32.8px;top:371.3px;font-size:13px;color:#0a0a0a;transform:scaleX(0.893);">создайте</div>
<div class="t" style="left:33.0px;top:386.3px;font-size:13px;color:#0a0a0a;transform:scaleX(0.929);">заголовки в</div>
<div class="t" style="left:33.2px;top:401.3px;font-size:13px;color:#0a0a0a;transform:scaleX(0.908);">документе,</div>
<div class="t" style="left:32.5px;top:416.3px;font-size:13px;color:#0a0a0a;transform:scaleX(0.948);">применив стили</div>
<div class="t" style="left:33.0px;top:431.3px;font-size:13px;color:#0a0a0a;transform:scaleX(0.944);">заголовков.</div>
<div style="left:169px;top:168px;width:25px;height:24px;border:1px solid #565656;background:#707070"></div>
<div style="left:174px;top:172px;width:15px;height:15px;background:#adadad;border:1px solid #484848;box-shadow:inset 0 0 0 1px #bdbdbd"></div>
<svg style="left:179px;top:178px" width="6" height="6" viewBox="0 0 6 6"><path d="M1 0v4.800h5" fill="none" stroke="#484848" stroke-width="1.800"/></svg>
<div style="left:221px;top:173px;width:119.6px;height:12.5px;background:#6c6c6c;border:1px solid #565656;border-right:none"></div>
<div style="left:340.6px;top:173px;width:656.9px;height:12.5px;background:#ababab;border-top:1px solid #8a8a8a;border-bottom:1px solid #7a7a7a"></div>
<div style="left:997.5px;top:173px;width:61px;height:12.5px;background:#6c6c6c;border:1px solid #565656;border-left:none"></div>
<svg style="left:0;top:0" width="1108" height="200"><defs><clipPath id="hc"><rect x="215" y="170" width="843.500" height="25"/></clipPath></defs><g clip-path="url(#hc)"><text x="222.5" y="182.9" text-anchor="middle" font-family="Liberation Sans,sans-serif" font-size="9.400" fill="#2a2a2a">3</text><rect x="232" y="178" width="1" height="2" fill="#2a2a2a"/><rect x="242" y="177" width="1" height="5" fill="#2a2a2a"/><rect x="252" y="178" width="1" height="2" fill="#2a2a2a"/><text x="262.2" y="182.9" text-anchor="middle" font-family="Liberation Sans,sans-serif" font-size="9.400" fill="#2a2a2a">2</text><rect x="272" y="178" width="1" height="2" fill="#2a2a2a"/><rect x="282" y="177" width="1" height="5" fill="#2a2a2a"/><rect x="291" y="178" width="1" height="2" fill="#2a2a2a"/><text x="301.9" y="182.9" text-anchor="middle" font-family="Liberation Sans,sans-serif" font-size="9.400" fill="#2a2a2a">1</text><rect x="311" y="178" width="1" height="2" fill="#2a2a2a"/><rect x="321" y="177" width="1" height="5" fill="#2a2a2a"/><rect x="331" y="178" width="1" height="2" fill="#2a2a2a"/><rect x="350" y="178" width="1" height="2" fill="#2a2a2a"/><rect x="360" y="177" width="1" height="5" fill="#2a2a2a"/><rect x="370" y="178" width="1" height="2" fill="#2a2a2a"/><text x="380.3" y="182.9" text-anchor="middle" font-family="Liberation Sans,sans-serif" font-size="9.400" fill="#2a2a2a">1</text><rect x="390" y="178" width="1" height="2" fill="#2a2a2a"/><rect x="400" y="177" width="1" height="5" fill="#2a2a2a"/><rect x="410" y="178" width="1" height="2" fill="#2a2a2a"/><text x="420.0" y="182.9" text-anchor="middle" font-family="Liberation Sans,sans-serif" font-size="9.400" fill="#2a2a2a">2</text><rect x="429" y="178" width="1" height="2" fill="#2a2a2a"/><rect x="439" y="177" width="1" height="5" fill="#2a2a2a"/><rect x="449" y="178" width="1" height="2" fill="#2a2a2a"/><text x="459.7" y="182.9" text-anchor="middle" font-family="Liberation Sans,sans-serif" font-size="9.400" fill="#2a2a2a">3</text><rect x="469" y="178" width="1" height="2" fill="#2a2a2a"/><rect x="479" y="177" width="1" height="5" fill="#2a2a2a"/><rect x="489" y="178" width="1" height="2" fill="#2a2a2a"/><text x="499.4" y="182.9" text-anchor="middle" font-family="Liberation Sans,sans-serif" font-size="9.400" fill="#2a2a2a">4</text><rect x="509" y="178" width="1" height="2" fill="#2a2a2a"/><rect x="519" y="177" width="1" height="5" fill="#2a2a2a"/><rect x="529" y="178" width="1" height="2" fill="#2a2a2a"/><text x="539.1" y="182.9" text-anchor="middle" font-family="Liberation Sans,sans-serif" font-size="9.400" fill="#2a2a2a">5</text><rect x="549" y="178" width="1" height="2" fill="#2a2a2a"/><rect x="558" y="177" width="1" height="5" fill="#2a2a2a"/><rect x="568" y="178" width="1" height="2" fill="#2a2a2a"/><text x="578.8" y="182.9" text-anchor="middle" font-family="Liberation Sans,sans-serif" font-size="9.400" fill="#2a2a2a">6</text><rect x="588" y="178" width="1" height="2" fill="#2a2a2a"/><rect x="598" y="177" width="1" height="5" fill="#2a2a2a"/><rect x="608" y="178" width="1" height="2" fill="#2a2a2a"/><text x="618.5" y="182.9" text-anchor="middle" font-family="Liberation Sans,sans-serif" font-size="9.400" fill="#2a2a2a">7</text><rect x="628" y="178" width="1" height="2" fill="#2a2a2a"/><rect x="638" y="177" width="1" height="5" fill="#2a2a2a"/><rect x="648" y="178" width="1" height="2" fill="#2a2a2a"/><text x="658.2" y="182.9" text-anchor="middle" font-family="Liberation Sans,sans-serif" font-size="9.400" fill="#2a2a2a">8</text><rect x="668" y="178" width="1" height="2" fill="#2a2a2a"/><rect x="678" y="177" width="1" height="5" fill="#2a2a2a"/><rect x="687" y="178" width="1" height="2" fill="#2a2a2a"/><text x="697.9" y="182.9" text-anchor="middle" font-family="Liberation Sans,sans-serif" font-size="9.400" fill="#2a2a2a">9</text><rect x="707" y="178" width="1" height="2" fill="#2a2a2a"/><rect x="717" y="177" width="1" height="5" fill="#2a2a2a"/><rect x="727" y="178" width="1" height="2" fill="#2a2a2a"/><text x="737.6" y="182.9" text-anchor="middle" font-family="Liberation Sans,sans-serif" font-size="9.400" fill="#2a2a2a">10</text><rect x="747" y="178" width="1" height="2" fill="#2a2a2a"/><rect x="757" y="177" width="1" height="5" fill="#2a2a2a"/><rect x="767" y="178" width="1" height="2" fill="#2a2a2a"/><text x="777.3" y="182.9" text-anchor="middle" font-family="Liberation Sans,sans-serif" font-size="9.400" fill="#2a2a2a">11</text><rect x="787" y="178" width="1" height="2" fill="#2a2a2a"/><rect x="797" y="177" width="1" height="5" fill="#2a2a2a"/><rect x="807" y="178" width="1" height="2" fill="#2a2a2a"/><text x="817.0" y="182.9" text-anchor="middle" font-family="Liberation Sans,sans-serif" font-size="9.400" fill="#2a2a2a">12</text><rect x="826" y="178" width="1" height="2" fill="#2a2a2a"/><rect x="836" y="177" width="1" height="5" fill="#2a2a2a"/><rect x="846" y="178" width="1" height="2" fill="#2a2a2a"/><text x="856.7" y="182.9" text-anchor="middle" font-family="Liberation Sans,sans-serif" font-size="9.400" fill="#2a2a2a">13</text><rect x="866" y="178" width="1" height="2" fill="#2a2a2a"/><rect x="876" y="177" width="1" height="5" fill="#2a2a2a"/><rect x="886" y="178" width="1" height="2" fill="#2a2a2a"/><text x="896.4" y="182.9" text-anchor="middle" font-family="Liberation Sans,sans-serif" font-size="9.400" fill="#2a2a2a">14</text><rect x="906" y="178" width="1" height="2" fill="#2a2a2a"/><rect x="916" y="177" width="1" height="5" fill="#2a2a2a"/><rect x="926" y="178" width="1" height="2" fill="#2a2a2a"/><text x="936.1" y="182.9" text-anchor="middle" font-family="Liberation Sans,sans-serif" font-size="9.400" fill="#2a2a2a">15</text><rect x="946" y="178" width="1" height="2" fill="#2a2a2a"/><rect x="955" y="177" width="1" height="5" fill="#2a2a2a"/><rect x="965" y="178" width="1" height="2" fill="#2a2a2a"/><text x="975.8" y="182.9" text-anchor="middle" font-family="Liberation Sans,sans-serif" font-size="9.400" fill="#2a2a2a">16</text><rect x="985" y="178" width="1" height="2" fill="#2a2a2a"/><rect x="995" y="177" width="1" height="5" fill="#2a2a2a"/><rect x="1005" y="178" width="1" height="2" fill="#2a2a2a"/><text x="1015.5" y="182.9" text-anchor="middle" font-family="Liberation Sans,sans-serif" font-size="9.400" fill="#2a2a2a">17</text><rect x="1025" y="178" width="1" height="2" fill="#2a2a2a"/><rect x="1035" y="177" width="1" height="5" fill="#2a2a2a"/><rect x="1045" y="178" width="1" height="2" fill="#2a2a2a"/><rect x="390" y="187" width="1" height="3" fill="#2f2f2f"/><rect x="439" y="187" width="1" height="3" fill="#2f2f2f"/><rect x="489" y="187" width="1" height="3" fill="#2f2f2f"/><rect x="539" y="187" width="1" height="3" fill="#2f2f2f"/><rect x="588" y="187" width="1" height="3" fill="#2f2f2f"/><rect x="638" y="187" width="1" height="3" fill="#2f2f2f"/><rect x="687" y="187" width="1" height="3" fill="#2f2f2f"/><rect x="737" y="187" width="1" height="3" fill="#2f2f2f"/><rect x="787" y="187" width="1" height="3" fill="#2f2f2f"/><rect x="836" y="187" width="1" height="3" fill="#2f2f2f"/><rect x="886" y="187" width="1" height="3" fill="#2f2f2f"/><rect x="936" y="187" width="1" height="3" fill="#2f2f2f"/><rect x="985" y="187" width="1" height="3" fill="#2f2f2f"/></g></svg>
<svg style="left:336.5px;top:170.7px" width="8" height="20.5" viewBox="0 0 8 20.5"><defs><linearGradient id="mk" x1="0" y1="0" x2="1" y2="1"><stop offset="0" stop-color="#efefef"/><stop offset="1" stop-color="#c4c4c4"/></linearGradient></defs><path d="M0.400 0.400h7.200v3.200l-3.600 4.200-3.600-4.200z" fill="url(#mk)" stroke="#8a8a8a" stroke-width=".7"/><path d="M0.400 14.700v-2.700l3.600-4.200 3.600 4.200v2.700z" fill="url(#mk)" stroke="#8a8a8a" stroke-width=".7"/><rect x="0.400" y="15.300" width="7.200" height="4.700" fill="url(#mk)" stroke="#8a8a8a" stroke-width=".7"/></svg>
<svg style="left:993.5px;top:178.5px" width="8" height="7" viewBox="0 0 8 7"><path d="M0.400 6.600v-2.700l3.600-3.500 3.600 3.500v2.700z" fill="url(#mk)" stroke="#8a8a8a" stroke-width=".7"/></svg>
<div style="left:174px;top:209px;width:14px;height:82.8px;background:#6c6c6c;border:1px solid #565656;border-bottom:none"></div>
<div style="left:174px;top:291.8px;width:14px;height:461.2px;background:#ababab;border-left:1px solid #606060;border-right:1px solid #5c5c5c"></div>
<svg style="left:0;top:0" width="200" height="753"><defs><clipPath id="vc"><rect x="170" y="209" width="24" height="543"/></clipPath></defs><g clip-path="url(#vc)"><text transform="translate(184.4 211.4) rotate(-90)" text-anchor="middle" font-family="Liberation Sans,sans-serif" font-size="9.400" fill="#2a2a2a">2</text><rect x="180" y="221" width="2" height="1" fill="#2a2a2a"/><rect x="179" y="231" width="5" height="1" fill="#2a2a2a"/><rect x="180" y="241" width="2" height="1" fill="#2a2a2a"/><text transform="translate(184.4 251.1) rotate(-90)" text-anchor="middle" font-family="Liberation Sans,sans-serif" font-size="9.400" fill="#2a2a2a">1</text><rect x="180" y="261" width="2" height="1" fill="#2a2a2a"/><rect x="179" y="270" width="5" height="1" fill="#2a2a2a"/><rect x="180" y="280" width="2" height="1" fill="#2a2a2a"/><rect x="180" y="300" width="2" height="1" fill="#2a2a2a"/><rect x="179" y="310" width="5" height="1" fill="#2a2a2a"/><rect x="180" y="320" width="2" height="1" fill="#2a2a2a"/><text transform="translate(184.4 330.5) rotate(-90)" text-anchor="middle" font-family="Liberation Sans,sans-serif" font-size="9.400" fill="#2a2a2a">1</text><rect x="180" y="340" width="2" height="1" fill="#2a2a2a"/><rect x="179" y="350" width="5" height="1" fill="#2a2a2a"/><rect x="180" y="360" width="2" height="1" fill="#2a2a2a"/><text transform="translate(184.4 370.2) rotate(-90)" text-anchor="middle" font-family="Liberation Sans,sans-serif" font-size="9.400" fill="#2a2a2a">2</text><rect x="180" y="380" width="2" height="1" fill="#2a2a2a"/><rect x="179" y="390" width="5" height="1" fill="#2a2a2a"/><rect x="180" y="399" width="2" height="1" fill="#2a2a2a"/><text transform="translate(184.4 409.9) rotate(-90)" text-anchor="middle" font-family="Liberation Sans,sans-serif" font-size="9.400" fill="#2a2a2a">3</text><rect x="180" y="419" width="2" height="1" fill="#2a2a2a"/><rect x="179" y="429" width="5" height="1" fill="#2a2a2a"/><rect x="180" y="439" width="2" height="1" fill="#2a2a2a"/><text transform="translate(184.4 449.6) rotate(-90)" text-anchor="middle" font-family="Liberation Sans,sans-serif" font-size="9.400" fill="#2a2a2a">4</text><rect x="180" y="459" width="2" height="1" fill="#2a2a2a"/><rect x="179" y="469" width="5" height="1" fill="#2a2a2a"/><rect x="180" y="479" width="2" height="1" fill="#2a2a2a"/><text transform="translate(184.4 489.3) rotate(-90)" text-anchor="middle" font-family="Liberation Sans,sans-serif" font-size="9.400" fill="#2a2a2a">5</text><rect x="180" y="499" width="2" height="1" fill="#2a2a2a"/><rect x="179" y="509" width="5" height="1" fill="#2a2a2a"/><rect x="180" y="519" width="2" height="1" fill="#2a2a2a"/><text transform="translate(184.4 529.0) rotate(-90)" text-anchor="middle" font-family="Liberation Sans,sans-serif" font-size="9.400" fill="#2a2a2a">6</text><rect x="180" y="538" width="2" height="1" fill="#2a2a2a"/><rect x="179" y="548" width="5" height="1" fill="#2a2a2a"/><rect x="180" y="558" width="2" height="1" fill="#2a2a2a"/><text transform="translate(184.4 568.7) rotate(-90)" text-anchor="middle" font-family="Liberation Sans,sans-serif" font-size="9.400" fill="#2a2a2a">7</text><rect x="180" y="578" width="2" height="1" fill="#2a2a2a"/><rect x="179" y="588" width="5" height="1" fill="#2a2a2a"/><rect x="180" y="598" width="2" height="1" fill="#2a2a2a"/><text transform="translate(184.4 608.4) rotate(-90)" text-anchor="middle" font-family="Liberation Sans,sans-serif" font-size="9.400" fill="#2a2a2a">8</text><rect x="180" y="618" width="2" height="1" fill="#2a2a2a"/><rect x="179" y="628" width="5" height="1" fill="#2a2a2a"/><rect x="180" y="638" width="2" height="1" fill="#2a2a2a"/><text transform="translate(184.4 648.1) rotate(-90)" text-anchor="middle" font-family="Liberation Sans,sans-serif" font-size="9.400" fill="#2a2a2a">9</text><rect x="180" y="658" width="2" height="1" fill="#2a2a2a"/><rect x="179" y="667" width="5" height="1" fill="#2a2a2a"/><rect x="180" y="677" width="2" height="1" fill="#2a2a2a"/><text transform="translate(184.4 687.8) rotate(-90)" text-anchor="middle" font-family="Liberation Sans,sans-serif" font-size="9.400" fill="#2a2a2a">10</text><rect x="180" y="697" width="2" height="1" fill="#2a2a2a"/><rect x="179" y="707" width="5" height="1" fill="#2a2a2a"/><rect x="180" y="717" width="2" height="1" fill="#2a2a2a"/><text transform="translate(184.4 727.5) rotate(-90)" text-anchor="middle" font-family="Liberation Sans,sans-serif" font-size="9.400" fill="#2a2a2a">11</text><rect x="180" y="737" width="2" height="1" fill="#2a2a2a"/><rect x="179" y="747" width="5" height="1" fill="#2a2a2a"/></g></svg>
<div style="left:221px;top:209px;width:836.5px;height:544px;background:#e1e0e5;box-shadow:0 0 7px 2px rgba(30,30,30,.55)"></div>
<div style="left:341px;top:290px;width:118.8px;height:30.5px;background:#b2b2b6"></div>
<div class="t" style="left:340.99px;top:295.6px;font-size:11.5px;font-weight:bold;color:#151515;letter-spacing:-0.67px">···········</div>
<div class="t" style="left:375.8px;top:294.6px;font-size:12.6px;color:#151515;transform:scaleX(1.416);">в</div>
<div class="t" style="left:385.19px;top:295.6px;font-size:11.5px;font-weight:bold;color:#151515;letter-spacing:-0.67px">·</div>
<div class="t" style="left:388.3px;top:294.6px;font-size:12.6px;color:#151515;transform:scaleX(1.077);">точке</div>
<div class="t" style="left:422.79px;top:295.6px;font-size:11.5px;font-weight:bold;color:#151515;letter-spacing:-0.67px">··</div>
<div class="t" style="left:429.5px;top:294.6px;font-size:12.6px;color:#151515;">X=</div>
<div class="t" style="left:445.69px;top:295.6px;font-size:11.5px;font-weight:bold;color:#151515;letter-spacing:-0.67px">····</div>
<div class="t" style="left:459.8px;top:294.6px;font-size:12.6px;color:#151515;transform:scaleX(0.989);">77213</div>
<div class="t" style="left:495.19px;top:295.6px;font-size:11.5px;font-weight:bold;color:#151515;letter-spacing:-0.67px">·</div>
<div class="t" style="left:502.29px;top:295.6px;font-size:11.5px;font-weight:bold;color:#151515;letter-spacing:-0.67px">·</div>
<div class="t" style="left:505.9px;top:294.6px;font-size:12.6px;color:#151515;transform:scaleX(0.947);">Y=</div>
<div class="t" style="left:521.29px;top:295.6px;font-size:11.5px;font-weight:bold;color:#151515;letter-spacing:-0.67px">···</div>
<div class="t" style="left:531.0px;top:294.6px;font-size:12.6px;color:#151515;transform:scaleX(1.027);">171152</div>
<div class="t" style="left:573.59px;top:295.6px;font-size:11.5px;font-weight:bold;color:#151515;letter-spacing:-0.67px">·</div>
<div class="t" style="left:581.99px;top:295.6px;font-size:11.5px;font-weight:bold;color:#151515;letter-spacing:-0.67px">·</div>
<div class="t" style="left:585.2px;top:294.6px;font-size:12.6px;color:#151515;transform:scaleX(0.939);">Z=</div>
<div class="t" style="left:600.29px;top:295.6px;font-size:11.5px;font-weight:bold;color:#151515;letter-spacing:-0.73px">·········</div>
<div class="t" style="left:628.5px;top:294.6px;font-size:12.6px;color:#151515;transform:scaleX(0.913);">0</div>
<div class="t" style="left:635.9px;top:295.3px;font-size:13.4px;color:#151515;font-weight:bold;transform:scaleX(0.916);">¶</div>
<div class="t" style="left:340.99px;top:327.6px;font-size:11.5px;font-weight:bold;color:#151515;letter-spacing:-0.67px">···········</div>
<div class="t" style="left:375.8px;top:326.6px;font-size:12.6px;color:#151515;transform:scaleX(1.416);">в</div>
<div class="t" style="left:385.19px;top:327.6px;font-size:11.5px;font-weight:bold;color:#151515;letter-spacing:-0.67px">·</div>
<div class="t" style="left:388.3px;top:326.6px;font-size:12.6px;color:#151515;transform:scaleX(1.077);">точке</div>
<div class="t" style="left:422.79px;top:327.6px;font-size:11.5px;font-weight:bold;color:#151515;letter-spacing:-0.67px">··</div>
<div class="t" style="left:429.5px;top:326.6px;font-size:12.6px;color:#151515;">X=</div>
<div class="t" style="left:445.69px;top:327.6px;font-size:11.5px;font-weight:bold;color:#151515;letter-spacing:-0.67px">····</div>
<div class="t" style="left:459.8px;top:326.6px;font-size:12.6px;color:#151515;transform:scaleX(0.992);">77217</div>
<div class="t" style="left:495.19px;top:327.6px;font-size:11.5px;font-weight:bold;color:#151515;letter-spacing:-0.67px">·</div>
<div class="t" style="left:502.29px;top:327.6px;font-size:11.5px;font-weight:bold;color:#151515;letter-spacing:-0.67px">·</div>
<div class="t" style="left:505.9px;top:326.6px;font-size:12.6px;color:#151515;transform:scaleX(0.947);">Y=</div>
<div class="t" style="left:521.29px;top:327.6px;font-size:11.5px;font-weight:bold;color:#151515;letter-spacing:-0.67px">···</div>
<div class="t" style="left:531.0px;top:326.6px;font-size:12.6px;color:#151515;transform:scaleX(1.027);">171152</div>
<div class="t" style="left:573.59px;top:327.6px;font-size:11.5px;font-weight:bold;color:#151515;letter-spacing:-0.67px">·</div>
<div class="t" style="left:581.99px;top:327.6px;font-size:11.5px;font-weight:bold;color:#151515;letter-spacing:-0.67px">·</div>
<div class="t" style="left:585.2px;top:326.6px;font-size:12.6px;color:#151515;transform:scaleX(0.939);">Z=</div>
<div class="t" style="left:600.29px;top:327.6px;font-size:11.5px;font-weight:bold;color:#151515;letter-spacing:-0.73px">·········</div>
<div class="t" style="left:628.5px;top:326.6px;font-size:12.6px;color:#151515;transform:scaleX(0.913);">0</div>
<div class="t" style="left:635.9px;top:327.3px;font-size:13.4px;color:#151515;font-weight:bold;transform:scaleX(0.916);">¶</div>
<div class="t" style="left:340.99px;top:358.6px;font-size:11.5px;font-weight:bold;color:#151515;letter-spacing:-0.67px">···········</div>
<div class="t" style="left:375.8px;top:357.6px;font-size:12.6px;color:#151515;transform:scaleX(1.416);">в</div>
<div class="t" style="left:385.19px;top:358.6px;font-size:11.5px;font-weight:bold;color:#151515;letter-spacing:-0.67px">·</div>
<div class="t" style="left:388.3px;top:357.6px;font-size:12.6px;color:#151515;transform:scaleX(1.077);">точке</div>
<div class="t" style="left:422.79px;top:358.6px;font-size:11.5px;font-weight:bold;color:#151515;letter-spacing:-0.67px">··</div>
<div class="t" style="left:429.5px;top:357.6px;font-size:12.6px;color:#151515;">X=</div>
<div class="t" style="left:445.69px;top:358.6px;font-size:11.5px;font-weight:bold;color:#151515;letter-spacing:-0.67px">····</div>
<div class="t" style="left:459.8px;top:357.6px;font-size:12.6px;color:#151515;transform:scaleX(0.989);">77223</div>
<div class="t" style="left:495.19px;top:358.6px;font-size:11.5px;font-weight:bold;color:#151515;letter-spacing:-0.67px">·</div>
<div class="t" style="left:502.29px;top:358.6px;font-size:11.5px;font-weight:bold;color:#151515;letter-spacing:-0.67px">·</div>
<div class="t" style="left:505.9px;top:357.6px;font-size:12.6px;color:#151515;transform:scaleX(0.947);">Y=</div>
<div class="t" style="left:521.29px;top:358.6px;font-size:11.5px;font-weight:bold;color:#151515;letter-spacing:-0.67px">···</div>
<div class="t" style="left:531.0px;top:357.6px;font-size:12.6px;color:#151515;transform:scaleX(1.025);">171156</div>
<div class="t" style="left:573.59px;top:358.6px;font-size:11.5px;font-weight:bold;color:#151515;letter-spacing:-0.67px">·</div>
<div class="t" style="left:581.99px;top:358.6px;font-size:11.5px;font-weight:bold;color:#151515;letter-spacing:-0.67px">·</div>
<div class="t" style="left:585.2px;top:357.6px;font-size:12.6px;color:#151515;transform:scaleX(0.939);">Z=</div>
<div class="t" style="left:600.29px;top:358.6px;font-size:11.5px;font-weight:bold;color:#151515;letter-spacing:-0.73px">·········</div>
<div class="t" style="left:628.5px;top:357.6px;font-size:12.6px;color:#151515;transform:scaleX(0.913);">0</div>
<div class="t" style="left:635.9px;top:358.3px;font-size:13.4px;color:#151515;font-weight:bold;transform:scaleX(0.916);">¶</div>
<div class="t" style="left:340.99px;top:390.6px;font-size:11.5px;font-weight:bold;color:#151515;letter-spacing:-0.67px">···········</div>
<div class="t" style="left:375.8px;top:389.6px;font-size:12.6px;color:#151515;transform:scaleX(1.416);">в</div>
<div class="t" style="left:385.19px;top:390.6px;font-size:11.5px;font-weight:bold;color:#151515;letter-spacing:-0.67px">·</div>
<div class="t" style="left:388.3px;top:389.6px;font-size:12.6px;color:#151515;transform:scaleX(1.077);">точке</div>
<div class="t" style="left:422.79px;top:390.6px;font-size:11.5px;font-weight:bold;color:#151515;letter-spacing:-0.67px">··</div>
<div class="t" style="left:429.5px;top:389.6px;font-size:12.6px;color:#151515;">X=</div>
<div class="t" style="left:445.69px;top:390.6px;font-size:11.5px;font-weight:bold;color:#151515;letter-spacing:-0.67px">····</div>
<div class="t" style="left:459.8px;top:389.6px;font-size:12.6px;color:#151515;transform:scaleX(0.984);">77234</div>
<div class="t" style="left:495.19px;top:390.6px;font-size:11.5px;font-weight:bold;color:#151515;letter-spacing:-0.67px">·</div>
<div class="t" style="left:502.29px;top:390.6px;font-size:11.5px;font-weight:bold;color:#151515;letter-spacing:-0.67px">·</div>
<div class="t" style="left:505.9px;top:389.6px;font-size:12.6px;color:#151515;transform:scaleX(0.947);">Y=</div>
<div class="t" style="left:521.29px;top:390.6px;font-size:11.5px;font-weight:bold;color:#151515;letter-spacing:-0.67px">···</div>
<div class="t" style="left:531.0px;top:389.6px;font-size:12.6px;color:#151515;transform:scaleX(1.027);">171142</div>
<div class="t" style="left:573.59px;top:390.6px;font-size:11.5px;font-weight:bold;color:#151515;letter-spacing:-0.67px">·</div>
<div class="t" style="left:581.99px;top:390.6px;font-size:11.5px;font-weight:bold;color:#151515;letter-spacing:-0.67px">·</div>
<div class="t" style="left:585.2px;top:389.6px;font-size:12.6px;color:#151515;transform:scaleX(0.939);">Z=</div>
<div class="t" style="left:600.29px;top:390.6px;font-size:11.5px;font-weight:bold;color:#151515;letter-spacing:-0.73px">·········</div>
<div class="t" style="left:628.5px;top:389.6px;font-size:12.6px;color:#151515;transform:scaleX(0.913);">0</div>
<div class="t" style="left:635.9px;top:390.3px;font-size:13.4px;color:#151515;font-weight:bold;transform:scaleX(0.916);">¶</div>
<div class="t" style="left:340.99px;top:421.6px;font-size:11.5px;font-weight:bold;color:#151515;letter-spacing:-0.67px">···········</div>
<div class="t" style="left:375.8px;top:420.6px;font-size:12.6px;color:#151515;transform:scaleX(1.416);">в</div>
<div class="t" style="left:385.19px;top:421.6px;font-size:11.5px;font-weight:bold;color:#151515;letter-spacing:-0.67px">·</div>
<div class="t" style="left:388.3px;top:420.6px;font-size:12.6px;color:#151515;transform:scaleX(1.077);">точке</div>
<div class="t" style="left:422.79px;top:421.6px;font-size:11.5px;font-weight:bold;color:#151515;letter-spacing:-0.67px">··</div>
<div class="t" style="left:429.5px;top:420.6px;font-size:12.6px;color:#151515;">X=</div>
<div class="t" style="left:445.69px;top:421.6px;font-size:11.5px;font-weight:bold;color:#151515;letter-spacing:-0.67px">····</div>
<div class="t" style="left:459.8px;top:420.6px;font-size:12.6px;color:#151515;transform:scaleX(0.992);">77262</div>
<div class="t" style="left:495.19px;top:421.6px;font-size:11.5px;font-weight:bold;color:#151515;letter-spacing:-0.67px">·</div>
<div class="t" style="left:502.29px;top:421.6px;font-size:11.5px;font-weight:bold;color:#151515;letter-spacing:-0.67px">·</div>
<div class="t" style="left:505.9px;top:420.6px;font-size:12.6px;color:#151515;transform:scaleX(0.947);">Y=</div>
<div class="t" style="left:521.29px;top:421.6px;font-size:11.5px;font-weight:bold;color:#151515;letter-spacing:-0.67px">···</div>
<div class="t" style="left:531.1px;top:420.6px;font-size:12.6px;color:#151515;">171059</div>
<div class="t" style="left:573.59px;top:421.6px;font-size:11.5px;font-weight:bold;color:#151515;letter-spacing:-0.67px">·</div>
<div class="t" style="left:581.99px;top:421.6px;font-size:11.5px;font-weight:bold;color:#151515;letter-spacing:-0.67px">·</div>
<div class="t" style="left:585.2px;top:420.6px;font-size:12.6px;color:#151515;transform:scaleX(0.939);">Z=</div>
<div class="t" style="left:600.29px;top:421.6px;font-size:11.5px;font-weight:bold;color:#151515;letter-spacing:-0.73px">·········</div>
<div class="t" style="left:628.5px;top:420.6px;font-size:12.6px;color:#151515;transform:scaleX(0.913);">0</div>
<div class="t" style="left:635.9px;top:421.3px;font-size:13.4px;color:#151515;font-weight:bold;transform:scaleX(0.916);">¶</div>
<div class="t" style="left:340.99px;top:453.6px;font-size:11.5px;font-weight:bold;color:#151515;letter-spacing:-0.67px">···········</div>
<div class="t" style="left:375.8px;top:452.6px;font-size:12.6px;color:#151515;transform:scaleX(1.416);">в</div>
<div class="t" style="left:385.19px;top:453.6px;font-size:11.5px;font-weight:bold;color:#151515;letter-spacing:-0.67px">·</div>
<div class="t" style="left:388.3px;top:452.6px;font-size:12.6px;color:#151515;transform:scaleX(1.077);">точке</div>
<div class="t" style="left:422.79px;top:453.6px;font-size:11.5px;font-weight:bold;color:#151515;letter-spacing:-0.67px">··</div>
<div class="t" style="left:429.5px;top:452.6px;font-size:12.6px;color:#151515;">X=</div>
<div class="t" style="left:445.69px;top:453.6px;font-size:11.5px;font-weight:bold;color:#151515;letter-spacing:-0.67px">····</div>
<div class="t" style="left:459.8px;top:452.6px;font-size:12.6px;color:#151515;transform:scaleX(0.988);">77265</div>
<div class="t" style="left:495.19px;top:453.6px;font-size:11.5px;font-weight:bold;color:#151515;letter-spacing:-0.67px">·</div>
<div class="t" style="left:502.29px;top:453.6px;font-size:11.5px;font-weight:bold;color:#151515;letter-spacing:-0.67px">·</div>
<div class="t" style="left:505.9px;top:452.6px;font-size:12.6px;color:#151515;transform:scaleX(0.947);">Y=</div>
<div class="t" style="left:521.29px;top:453.6px;font-size:11.5px;font-weight:bold;color:#151515;letter-spacing:-0.67px">···</div>
<div class="t" style="left:531.1px;top:452.6px;font-size:12.6px;color:#151515;">171056</div>
<div class="t" style="left:573.59px;top:453.6px;font-size:11.5px;font-weight:bold;color:#151515;letter-spacing:-0.67px">·</div>
<div class="t" style="left:581.99px;top:453.6px;font-size:11.5px;font-weight:bold;color:#151515;letter-spacing:-0.67px">·</div>
<div class="t" style="left:585.2px;top:452.6px;font-size:12.6px;color:#151515;transform:scaleX(0.939);">Z=</div>
<div class="t" style="left:600.29px;top:453.6px;font-size:11.5px;font-weight:bold;color:#151515;letter-spacing:-0.73px">·········</div>
<div class="t" style="left:628.5px;top:452.6px;font-size:12.6px;color:#151515;transform:scaleX(0.913);">0</div>
<div class="t" style="left:635.9px;top:453.3px;font-size:13.4px;color:#151515;font-weight:bold;transform:scaleX(0.916);">¶</div>
<div class="t" style="left:340.99px;top:484.6px;font-size:11.5px;font-weight:bold;color:#151515;letter-spacing:-0.67px">···········</div>
<div class="t" style="left:375.8px;top:483.6px;font-size:12.6px;color:#151515;transform:scaleX(1.416);">в</div>
<div class="t" style="left:385.19px;top:484.6px;font-size:11.5px;font-weight:bold;color:#151515;letter-spacing:-0.67px">·</div>
<div class="t" style="left:388.3px;top:483.6px;font-size:12.6px;color:#151515;transform:scaleX(1.077);">точке</div>
<div class="t" style="left:422.79px;top:484.6px;font-size:11.5px;font-weight:bold;color:#151515;letter-spacing:-0.67px">··</div>
<div class="t" style="left:429.5px;top:483.6px;font-size:12.6px;color:#151515;">X=</div>
<div class="t" style="left:445.69px;top:484.6px;font-size:11.5px;font-weight:bold;color:#151515;letter-spacing:-0.67px">····</div>
<div class="t" style="left:459.8px;top:483.6px;font-size:12.6px;color:#151515;transform:scaleX(0.989);">77256</div>
<div class="t" style="left:495.19px;top:484.6px;font-size:11.5px;font-weight:bold;color:#151515;letter-spacing:-0.67px">·</div>
<div class="t" style="left:502.29px;top:484.6px;font-size:11.5px;font-weight:bold;color:#151515;letter-spacing:-0.67px">·</div>
<div class="t" style="left:505.9px;top:483.6px;font-size:12.6px;color:#151515;transform:scaleX(0.947);">Y=</div>
<div class="t" style="left:521.29px;top:484.6px;font-size:11.5px;font-weight:bold;color:#151515;letter-spacing:-0.67px">···</div>
<div class="t" style="left:531.1px;top:483.6px;font-size:12.6px;color:#151515;">171047</div>
<div class="t" style="left:573.59px;top:484.6px;font-size:11.5px;font-weight:bold;color:#151515;letter-spacing:-0.67px">·</div>
<div class="t" style="left:581.99px;top:484.6px;font-size:11.5px;font-weight:bold;color:#151515;letter-spacing:-0.67px">·</div>
<div class="t" style="left:585.2px;top:483.6px;font-size:12.6px;color:#151515;transform:scaleX(0.939);">Z=</div>
<div class="t" style="left:600.29px;top:484.6px;font-size:11.5px;font-weight:bold;color:#151515;letter-spacing:-0.73px">·········</div>
<div class="t" style="left:628.5px;top:483.6px;font-size:12.6px;color:#151515;transform:scaleX(0.913);">0</div>
<div class="t" style="left:635.9px;top:484.3px;font-size:13.4px;color:#151515;font-weight:bold;transform:scaleX(0.916);">¶</div>
<div class="t" style="left:340.99px;top:516.6px;font-size:11.5px;font-weight:bold;color:#151515;letter-spacing:-0.67px">···········</div>
<div class="t" style="left:375.8px;top:515.6px;font-size:12.6px;color:#151515;transform:scaleX(1.416);">в</div>
<div class="t" style="left:385.19px;top:516.6px;font-size:11.5px;font-weight:bold;color:#151515;letter-spacing:-0.67px">·</div>
<div class="t" style="left:388.3px;top:515.6px;font-size:12.6px;color:#151515;transform:scaleX(1.077);">точке</div>
<div class="t" style="left:422.79px;top:516.6px;font-size:11.5px;font-weight:bold;color:#151515;letter-spacing:-0.67px">··</div>
<div class="t" style="left:429.5px;top:515.6px;font-size:12.6px;color:#151515;">X=</div>
<div class="t" style="left:445.69px;top:516.6px;font-size:11.5px;font-weight:bold;color:#151515;letter-spacing:-0.67px">····</div>
<div class="t" style="left:459.8px;top:515.6px;font-size:12.6px;color:#151515;transform:scaleX(0.992);">77252</div>
<div class="t" style="left:495.19px;top:516.6px;font-size:11.5px;font-weight:bold;color:#151515;letter-spacing:-0.67px">·</div>
<div class="t" style="left:502.29px;top:516.6px;font-size:11.5px;font-weight:bold;color:#151515;letter-spacing:-0.67px">·</div>
<div class="t" style="left:505.9px;top:515.6px;font-size:12.6px;color:#151515;transform:scaleX(0.947);">Y=</div>
<div class="t" style="left:521.29px;top:516.6px;font-size:11.5px;font-weight:bold;color:#151515;letter-spacing:-0.67px">···</div>
<div class="t" style="left:531.1px;top:515.6px;font-size:12.6px;color:#151515;">171051</div>
<div class="t" style="left:573.59px;top:516.6px;font-size:11.5px;font-weight:bold;color:#151515;letter-spacing:-0.67px">·</div>
<div class="t" style="left:581.99px;top:516.6px;font-size:11.5px;font-weight:bold;color:#151515;letter-spacing:-0.67px">·</div>
<div class="t" style="left:585.2px;top:515.6px;font-size:12.6px;color:#151515;transform:scaleX(0.939);">Z=</div>
<div class="t" style="left:600.29px;top:516.6px;font-size:11.5px;font-weight:bold;color:#151515;letter-spacing:-0.73px">·········</div>
<div class="t" style="left:628.5px;top:515.6px;font-size:12.6px;color:#151515;transform:scaleX(0.913);">0</div>
<div class="t" style="left:635.9px;top:516.3px;font-size:13.4px;color:#151515;font-weight:bold;transform:scaleX(0.916);">¶</div>
<div class="t" style="left:340.99px;top:547.6px;font-size:11.5px;font-weight:bold;color:#151515;letter-spacing:-0.67px">···········</div>
<div class="t" style="left:375.8px;top:546.6px;font-size:12.6px;color:#151515;transform:scaleX(1.416);">в</div>
<div class="t" style="left:385.19px;top:547.6px;font-size:11.5px;font-weight:bold;color:#151515;letter-spacing:-0.67px">·</div>
<div class="t" style="left:388.3px;top:546.6px;font-size:12.6px;color:#151515;transform:scaleX(1.077);">точке</div>
<div class="t" style="left:422.79px;top:547.6px;font-size:11.5px;font-weight:bold;color:#151515;letter-spacing:-0.67px">··</div>
<div class="t" style="left:429.5px;top:546.6px;font-size:12.6px;color:#151515;">X=</div>
<div class="t" style="left:445.69px;top:547.6px;font-size:11.5px;font-weight:bold;color:#151515;letter-spacing:-0.67px">····</div>
<div class="t" style="left:459.8px;top:546.6px;font-size:12.6px;color:#151515;transform:scaleX(0.991);">77271</div>
<div class="t" style="left:495.19px;top:547.6px;font-size:11.5px;font-weight:bold;color:#151515;letter-spacing:-0.67px">·</div>
<div class="t" style="left:502.29px;top:547.6px;font-size:11.5px;font-weight:bold;color:#151515;letter-spacing:-0.67px">·</div>
<div class="t" style="left:505.9px;top:546.6px;font-size:12.6px;color:#151515;transform:scaleX(0.947);">Y=</div>
<div class="t" style="left:521.29px;top:547.6px;font-size:11.5px;font-weight:bold;color:#151515;letter-spacing:-0.67px">···</div>
<div class="t" style="left:531.1px;top:546.6px;font-size:12.6px;color:#151515;">171075</div>
<div class="t" style="left:573.59px;top:547.6px;font-size:11.5px;font-weight:bold;color:#151515;letter-spacing:-0.67px">·</div>
<div class="t" style="left:581.99px;top:547.6px;font-size:11.5px;font-weight:bold;color:#151515;letter-spacing:-0.67px">·</div>
<div class="t" style="left:585.2px;top:546.6px;font-size:12.6px;color:#151515;transform:scaleX(0.939);">Z=</div>
<div class="t" style="left:600.29px;top:547.6px;font-size:11.5px;font-weight:bold;color:#151515;letter-spacing:-0.73px">·········</div>
<div class="t" style="left:628.5px;top:546.6px;font-size:12.6px;color:#151515;transform:scaleX(0.913);">0</div>
<div class="t" style="left:635.9px;top:547.3px;font-size:13.4px;color:#151515;font-weight:bold;transform:scaleX(0.916);">¶</div>
<div style="left:1086px;top:168.5px;width:19px;height:584.5px;background:linear-gradient(90deg,#666,#6c6c6c 40%,#666)"></div>
<div style="left:1086px;top:168.5px;width:19px;height:5.5px;background:#787878"></div>
<div style="left:1091px;top:170px;width:9px;height:2px;background:#4a4a4a"></div>
<div style="left:1086px;top:174px;width:19px;height:19px;background:#6a6a6a;border:1.500px solid #2a2a2a"></div>
<svg style="left:1089.5px;top:178px" width="12" height="11" viewBox="0 0 12 11"><rect x="0" y="1.500" width="12" height="6.500" fill="#efe8f2"/><path d="M1.500 0l3 4M9 3.500l-2.500 4" stroke="#6a6a6a" stroke-width="1.400"/><rect x="2" y="-0.500" width="2.200" height="1.800" fill="#efe8f2"/><rect x="6" y="8" width="2.500" height="2.500" fill="#efe8f2"/><circle cx="5" cy="5" r=".9" fill="#6a6a6a"/><circle cx="9.300" cy="5" r=".9" fill="#6a6a6a"/></svg>
<svg style="left:1089.5px;top:200px" width="12" height="6" viewBox="0 0 12 6"><path d="M0 6h12l-6-6z" fill="#2c2c2c"/></svg>
<div style="left:1086.5px;top:212px;width:17.5px;height:214px;background:linear-gradient(90deg,#6e6e6e,#787878 45%,#6a6a6a);border:1px solid #262626;border-radius:1px"></div>
<div style="left:1092px;top:314.5px;width:7px;height:1px;background:#9a9a9a"></div>
<div style="left:1092px;top:316.5px;width:7px;height:1px;background:#9a9a9a"></div>
<div style="left:1092px;top:318.5px;width:7px;height:1px;background:#9a9a9a"></div>
<div style="left:1092px;top:320.5px;width:7px;height:1px;background:#9a9a9a"></div>
<svg style="left:1090px;top:683px" width="11" height="6" viewBox="0 0 11 6"><path d="M0 0h11l-5.500 6z" fill="#2c2c2c"/></svg>
<div style="left:1086px;top:695px;width:19px;height:1px;background:#5a5a5a"></div>
<div style="left:1086px;top:696px;width:19px;height:57px;background:#646464"></div>
<svg style="left:1092px;top:701.5px" width="6" height="7" viewBox="0 0 6 7"><path d="M3 0l3 3h-6zM3 3l3 3h-6z" fill="#3a7aff"/><rect x="0" y="3" width="6" height="0.800" fill="#3a7aff"/></svg>
<svg style="left:1091.5px;top:719px" width="8" height="8" viewBox="0 0 8 8"><circle cx="4" cy="4" r="3.200" fill="#9c9c9c" stroke="#2e2e2e" stroke-width="1"/></svg>
<svg style="left:1092px;top:738.8px" width="6" height="7" viewBox="0 0 6 7"><path d="M3 7l3-3h-6zM3 4l3-3h-6z" fill="#3a7aff"/></svg>
<!-- p_status -->
<div style="left:0px;top:753px;width:1108px;height:33px;background:#6e6e6e"></div>
<div style="left:3px;top:753px;width:1102px;height:26.5px;background:linear-gradient(#2a2a2a 0,#2a2a2a 1px,#343434 1px,#343434 2px,#4c4c4c 2px,#4c4c4c 3px,#3f3f3f 3px,#3c3c3c 7px,#383838 60%,#343434 100%)"></div>
<div style="left:0px;top:779.5px;width:1108px;height:1px;background:#303030"></div>
<div style="left:0px;top:780.3px;width:1108px;height:3.5px;background:#7c7c7c"></div>
<div style="left:0px;top:783.8px;width:1108px;height:1.2px;background:#4c4c4c"></div>
<div style="left:0px;top:785px;width:1108px;height:1px;background:#4e4e5a"></div>
<div style="left:40px;top:785px;width:28px;height:1px;background:#f4f4f4"></div>
<div style="left:200px;top:785px;width:8px;height:1px;background:#e81020"></div>
<div style="left:272px;top:785px;width:24px;height:1px;background:#f0f4fb"></div>
<div style="left:347px;top:785px;width:25px;height:1px;background:#dcdcdc"></div>
<div style="left:422px;top:785px;width:24px;height:1px;background:#c8c8c8"></div>
<div style="left:500px;top:785px;width:23px;height:1px;background:#f0f4fb"></div>
<div style="left:570px;top:785px;width:30px;height:1px;background:#e8d040"></div>
<div style="left:657px;top:785px;width:8px;height:1px;background:#e81020"></div>
<div style="left:885px;top:785px;width:9px;height:1px;background:#e81020"></div>
<div style="left:960px;top:785px;width:20px;height:1px;background:#f4f4f4"></div>
<div style="left:1035px;top:785px;width:21px;height:1px;background:#f4f4f4"></div>
<div class="t" style="left:10.9px;top:759.0px;font-size:13px;color:#e6e6e6;transform:scaleX(0.882);-webkit-text-stroke:0;">Страница: 1 из 1</div>
<div class="t" style="left:119.8px;top:759.0px;font-size:13px;color:#e6e6e6;transform:scaleX(0.921);-webkit-text-stroke:0;">Число слов: 3/72</div>
<div class="t" style="left:267.9px;top:759.0px;font-size:13px;color:#e6e6e6;-webkit-text-stroke:0;">русский</div>
<div class="t" style="left:889.6px;top:759.2px;font-size:13px;color:#e6e6e6;transform:scaleX(0.895);-webkit-text-stroke:0;">105%</div>
<div style="left:109px;top:755.5px;width:3px;height:23.5px;background:linear-gradient(90deg,#4e4e4e 0,#4e4e4e 1px,#101010 1px,#101010 2px,#4e4e4e 2px);-webkit-mask-image:linear-gradient(transparent,#000 22%,#000 78%,transparent);mask-image:linear-gradient(transparent,#000 22%,#000 78%,transparent)"></div>
<div style="left:221.5px;top:755.5px;width:3px;height:23.5px;background:linear-gradient(90deg,#4e4e4e 0,#4e4e4e 1px,#101010 1px,#101010 2px,#4e4e4e 2px);-webkit-mask-image:linear-gradient(transparent,#000 22%,#000 78%,transparent);mask-image:linear-gradient(transparent,#000 22%,#000 78%,transparent)"></div>
<div style="left:380px;top:755.5px;width:3px;height:23.5px;background:linear-gradient(90deg,#4e4e4e 0,#4e4e4e 1px,#101010 1px,#101010 2px,#4e4e4e 2px);-webkit-mask-image:linear-gradient(transparent,#000 22%,#000 78%,transparent);mask-image:linear-gradient(transparent,#000 22%,#000 78%,transparent)"></div>
<div style="left:419px;top:755.5px;width:3px;height:23.5px;background:linear-gradient(90deg,#4e4e4e 0,#4e4e4e 1px,#101010 1px,#101010 2px,#4e4e4e 2px);-webkit-mask-image:linear-gradient(transparent,#000 22%,#000 78%,transparent);mask-image:linear-gradient(transparent,#000 22%,#000 78%,transparent)"></div>
<div style="left:763.3px;top:755.5px;width:3px;height:23.5px;background:linear-gradient(90deg,#4e4e4e 0,#4e4e4e 1px,#101010 1px,#101010 2px,#4e4e4e 2px);-webkit-mask-image:linear-gradient(transparent,#000 22%,#000 78%,transparent);mask-image:linear-gradient(transparent,#000 22%,#000 78%,transparent)"></div>
<svg style="left:232px;top:756px" width="20" height="18" viewBox="0 0 20 18"><path d="M0.500 9.800l8.500-5 10.300 5-8.600 5.700z" fill="#f8f8fb" stroke="#c8d0e4" stroke-width=".6"/><path d="M6 8.800l4.500 2.700 4.500-3" fill="none" stroke="#a8a8b0" stroke-width="2"/><path d="M0.500 9.800v2.400l10.200 5.600 8.600-5.700v-2.300l-8.600 5.700z" fill="#3a6ad8" stroke="#2a4ea8" stroke-width=".6"/><path d="M18.500 0.800l-6.500 5.200" stroke="#3a7ae8" stroke-width="1.800" stroke-linecap="round"/><circle cx="11.300" cy="6.800" r="2.400" fill="#5a9af0" stroke="#2a5ac0" stroke-width=".6"/><path d="M10.300 6.500h2.200" stroke="#e8f0ff" stroke-width=".9"/></svg>
<svg style="left:393px;top:759px" width="15" height="13" viewBox="0 0 15 13"><defs><radialGradient id="rb" cx=".4" cy=".35" r=".7"><stop offset="0" stop-color="#ff9a6a"/><stop offset="1" stop-color="#d83018"/></radialGradient></defs><rect x="0.300" y="0.300" width="14.400" height="12.400" fill="#fbfcff" stroke="#8aa0d8" stroke-width=".6"/><rect x="0.300" y="0.300" width="14.400" height="2.600" fill="#4a7ae8"/><path d="M2 6.500h3M6.300 6.500h3M10.600 6.500h3M2 8.600h3M6.300 8.600h3M10.600 8.600h3M2 10.700h3M6.300 10.700h3M10.600 10.700h3" stroke="#8a86c8" stroke-width="1"/><circle cx="2.800" cy="2.700" r="2.800" fill="url(#rb)"/></svg>
<div class="hot" style="left:769.200px;top:755.300px;width:22.800px;height:22.700px;background:linear-gradient(#fbd878,#f6c650 60%,#f8cc5c);border:1.500px solid #ffe28a;border-radius:3.500px"></div>
<svg style="left:774px;top:761px" width="14" height="13" viewBox="0 0 14 13"><rect x="0.500" y="0.500" width="13" height="12" fill="#f8f8f8" stroke="#303038" stroke-width="1"/><path d="M2 3.200h10M2 6.500h10M2 9.800h10" stroke="#8a8a8a" stroke-width="1.600"/></svg>
<svg style="left:797.3px;top:761px" width="12" height="13" viewBox="0 0 12 13"><path d="M0.300 0.800l5.200.8v10.800l-5.200-.8zM11.700 0.800l-5.200.8v10.800l5.200-.8z" fill="#f6f6f6" stroke="#e0e0e0" stroke-width=".5"/><path d="M1.300 3.300h3.200M1.300 5.600h3.200M1.300 7.900h3.200M1.300 10.200h3.200M7.500 3.300h3.200M7.500 5.600h3.200M7.500 7.900h3.200M7.500 10.200h3.200" stroke="#444" stroke-width="1"/><path d="M6 1.600v11" stroke="#555" stroke-width=".8"/></svg>
<svg style="left:818.5px;top:761px" width="14" height="13" viewBox="0 0 14 13"><rect x="0.300" y="0.300" width="10.500" height="9.800" fill="#f6f6f6" stroke="#dcdcdc" stroke-width=".5"/><path d="M1.500 2.500h8M1.500 5h8M1.500 7.500h5" stroke="#6a6a6a" stroke-width="1.400"/><circle cx="9.800" cy="9.300" r="3.300" fill="#2a7ae0" stroke="#1a4aa0" stroke-width=".5"/><path d="M7.800 9.800c.8-1.800 2.400-2 3.600-.4-.6 1.600-2.400 2-3.600.4z" fill="#4ab848"/></svg>
<svg style="left:842px;top:761.5px" width="12" height="12" viewBox="0 0 12 12"><path d="M0 0.500h1.500M5 0.500h6M3 3.200h1.500M6.500 3.200h4.500M3 5.900h1.500M6.500 5.900h4.500M0 8.600h1.500M5 8.600h6M0 11.300h1.500M5 11.300h6" stroke="#808080" stroke-width="1"/></svg>
<svg style="left:863.7px;top:761.5px" width="12.5" height="12" viewBox="0 0 12.5 12"><path d="M0 0.500h12.500M0 3.200h12.500M0 5.900h12.500M0 8.600h12.500M0 11.300h12.500" stroke="#9a9a9a" stroke-width="1"/></svg>
<div style="left:945px;top:765.5px;width:121px;height:1px;background:#777"></div>
<div style="left:945px;top:766.5px;width:121px;height:1px;background:#2a2a2a"></div>
<svg style="left:927.8px;top:756.9px" width="18" height="18" viewBox="0 0 18 18"><defs><linearGradient id="zb0" x1="0" y1="0" x2="0" y2="1"><stop offset="0" stop-color="#dadada"/><stop offset="1" stop-color="#9c9c9c"/></linearGradient></defs><circle cx="9" cy="9" r="8" fill="url(#zb0)" stroke="#262626" stroke-width="1.200"/><rect x="4" y="8" width="10" height="2" fill="#262626"/></svg>
<svg style="left:1066px;top:756.9px" width="18" height="18" viewBox="0 0 18 18"><defs><linearGradient id="zb1" x1="0" y1="0" x2="0" y2="1"><stop offset="0" stop-color="#dadada"/><stop offset="1" stop-color="#9c9c9c"/></linearGradient></defs><circle cx="9" cy="9" r="8" fill="url(#zb1)" stroke="#262626" stroke-width="1.200"/><rect x="4" y="8" width="10" height="2" fill="#262626"/><rect x="8" y="4" width="2" height="10" fill="#262626"/></svg>
<svg style="left:1002.5px;top:758.5px" width="9" height="14" viewBox="0 0 9 14"><path d="M0.500 0.500h8v9l-4 4-4-4z" fill="#b8b8b8" stroke="#555" stroke-width=".9"/><path d="M1.500 1.500h3v10l-3-3z" fill="#d4d4d4"/></svg>
<svg style="left:1091.8px;top:766px" width="13" height="13" viewBox="0 0 13 13"><rect x="11.2" y="1.2" width="2" height="2" fill="#5c5c5c"/><rect x="10" y="0" width="2.200" height="2.200" fill="#161616"/><rect x="6.2" y="6.2" width="2" height="2" fill="#5c5c5c"/><rect x="5" y="5" width="2.200" height="2.200" fill="#161616"/><rect x="11.2" y="6.2" width="2" height="2" fill="#5c5c5c"/><rect x="10" y="5" width="2.200" height="2.200" fill="#161616"/><rect x="1.2" y="11.2" width="2" height="2" fill="#5c5c5c"/><rect x="0" y="10" width="2.200" height="2.200" fill="#161616"/><rect x="6.2" y="11.2" width="2" height="2" fill="#5c5c5c"/><rect x="5" y="10" width="2.200" height="2.200" fill="#161616"/><rect x="11.2" y="11.2" width="2" height="2" fill="#5c5c5c"/><rect x="10" y="10" width="2.200" height="2.200" fill="#161616"/></svg>
<div style="left:0px;top:2px;width:2px;height:784px;background:#868686"></div>
<div style="left:2px;top:64px;width:1px;height:720px;background:#3c3c3c"></div>
<div style="left:1105px;top:64px;width:1px;height:720px;background:#3c3c3c"></div>
<div style="left:1106px;top:2px;width:2px;height:784px;background:#868686"></div>
</div>
</body>
</html>
